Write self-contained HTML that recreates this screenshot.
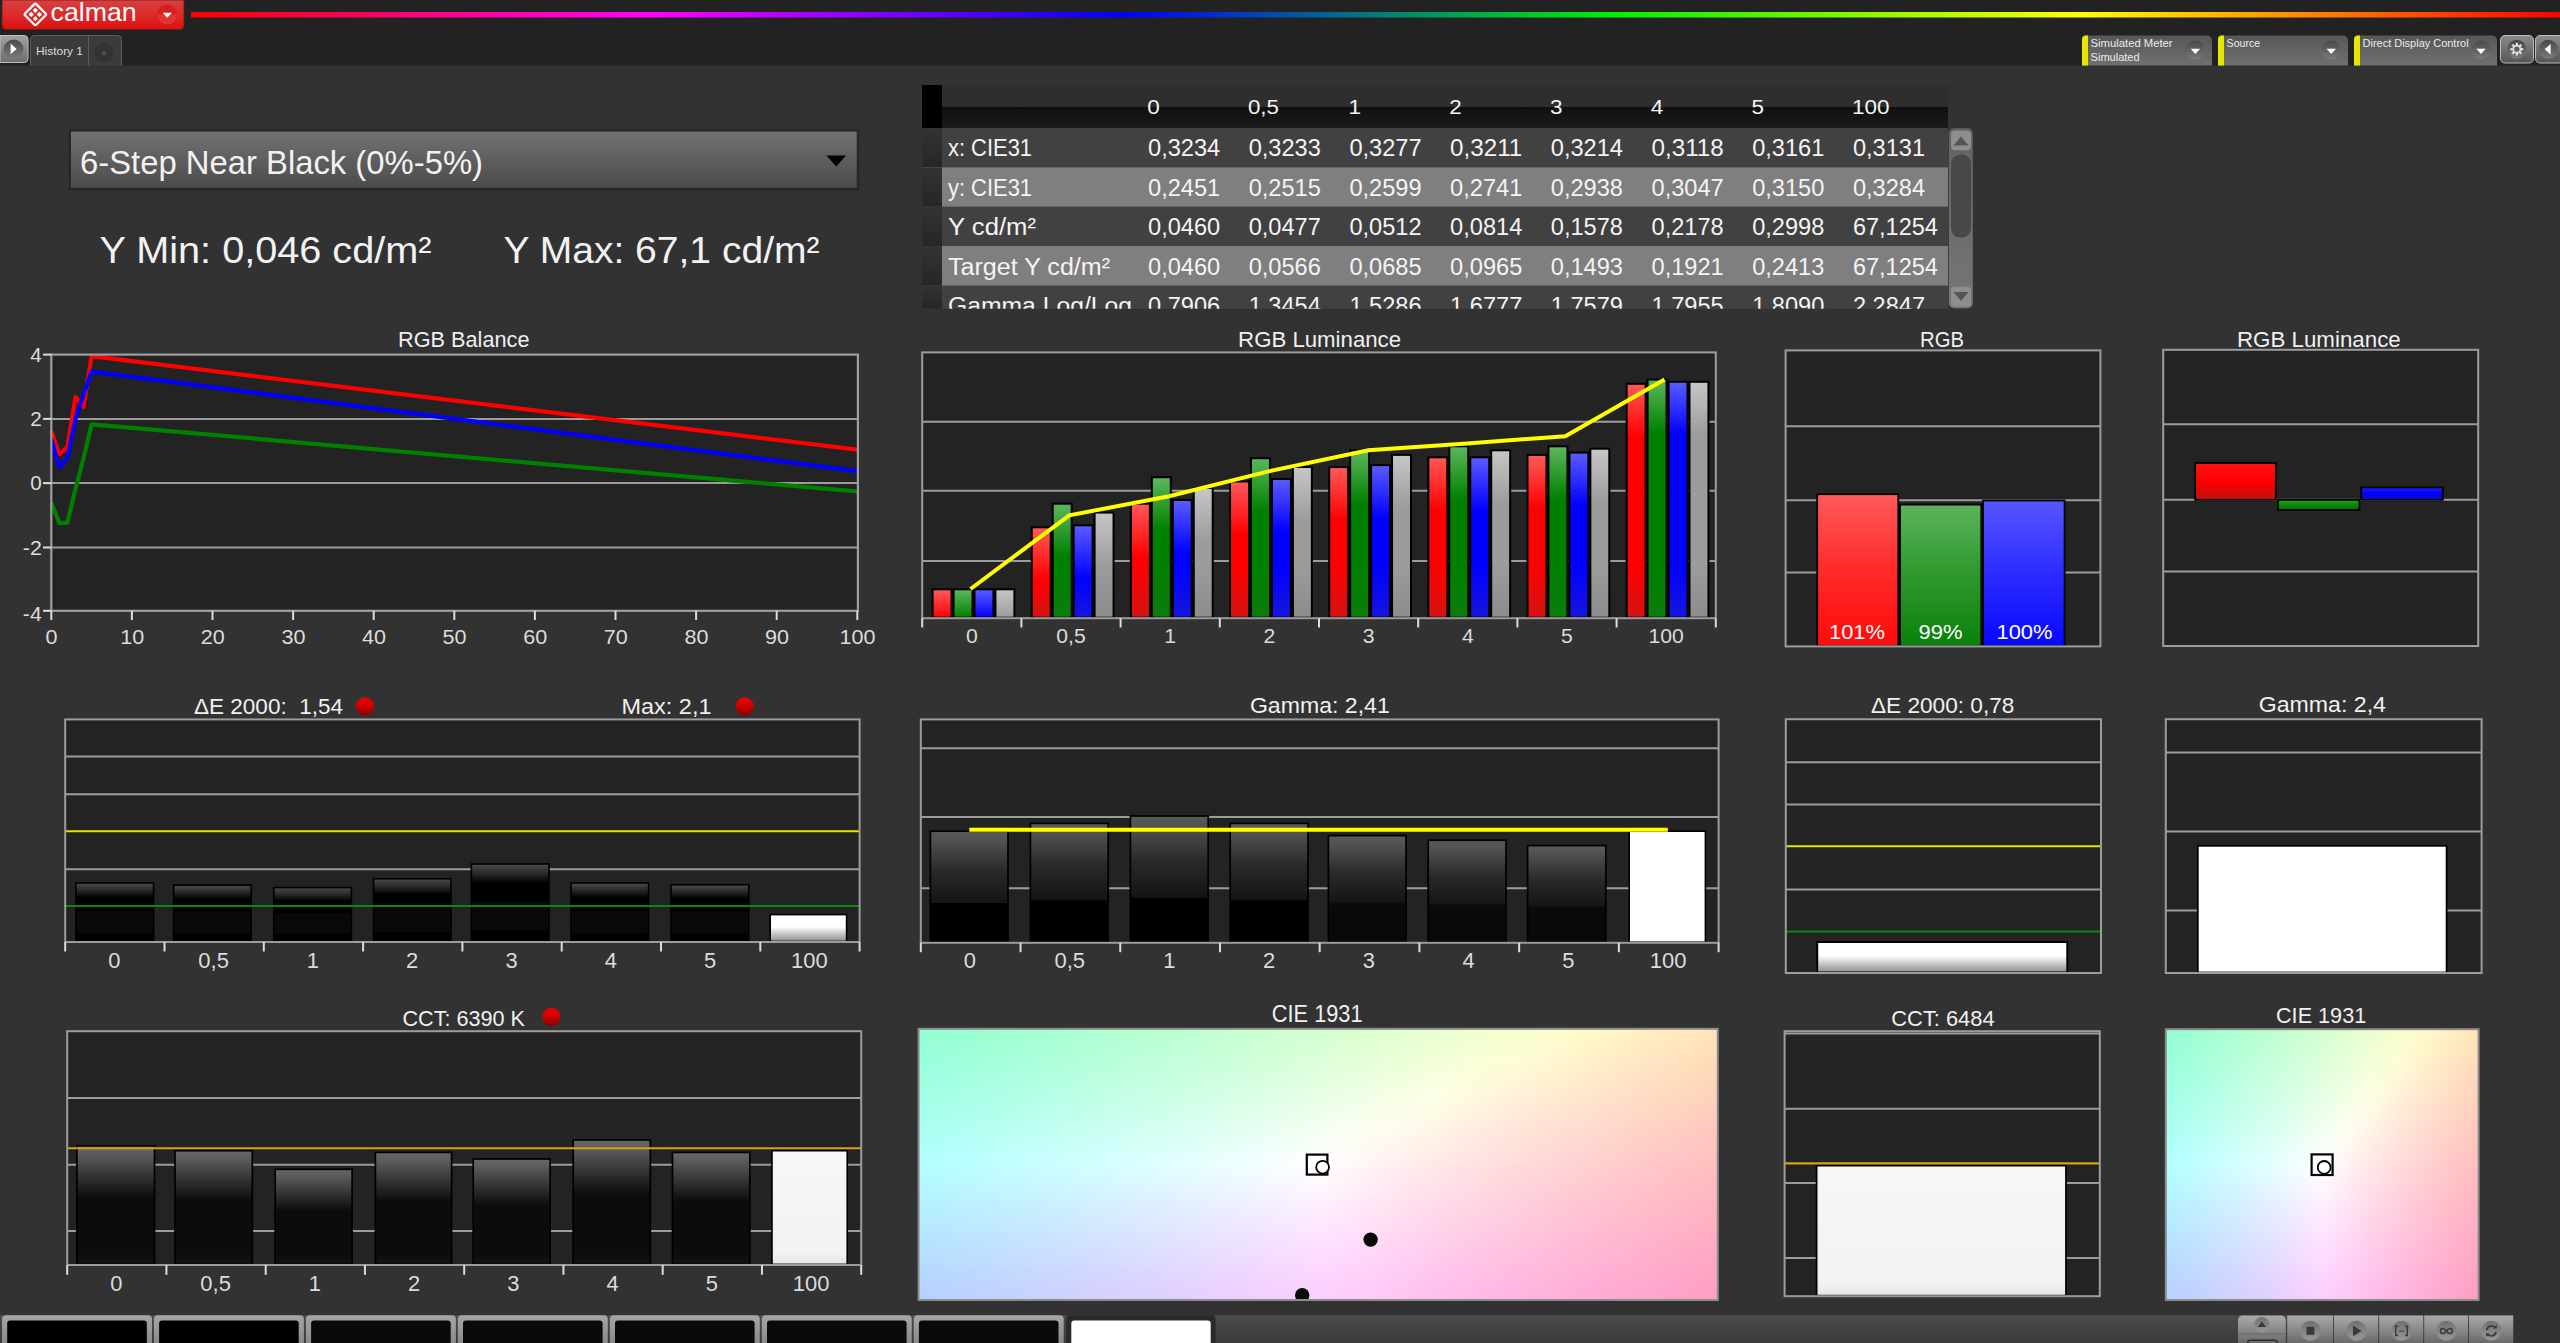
<!DOCTYPE html>
<html lang="en">
<head>
<meta charset="utf-8">
<title>Calman - 6-Step Near Black (0%-5%)</title>
<style>
html,body{margin:0;padding:0;background:#323232;overflow:hidden}
body{width:2560px;height:1343px;font-family:'Liberation Sans', sans-serif}
#app{position:relative;width:2560px;height:1343px;overflow:hidden;background:#323232}
svg{position:absolute;left:0;top:0;display:block}
svg text{font-family:'Liberation Sans', sans-serif;white-space:pre}
</style>
</head>
<body>
<div id="app">
<svg width="2560" height="1343" viewBox="0 0 2560 1343" xml:space="preserve">
<defs>
<linearGradient id="gRed" x1="0" y1="0" x2="0" y2="1"><stop offset="0" stop-color="#ff5a5a"/><stop offset="0.12" stop-color="#ff4a4a"/><stop offset="0.55" stop-color="#ff0000"/><stop offset="1" stop-color="#e01212"/></linearGradient>
<linearGradient id="gGreen" x1="0" y1="0" x2="0" y2="1"><stop offset="0" stop-color="#5cb65c"/><stop offset="0.12" stop-color="#4cae4c"/><stop offset="0.55" stop-color="#008000"/><stop offset="1" stop-color="#0a7a0a"/></linearGradient>
<linearGradient id="gBlue" x1="0" y1="0" x2="0" y2="1"><stop offset="0" stop-color="#5c5cff"/><stop offset="0.12" stop-color="#4c4cff"/><stop offset="0.55" stop-color="#0000ff"/><stop offset="1" stop-color="#1010e0"/></linearGradient>
<linearGradient id="gGray" x1="0" y1="0" x2="0" y2="1"><stop offset="0" stop-color="#c8c8c8"/><stop offset="0.12" stop-color="#c0c0c0"/><stop offset="0.55" stop-color="#989898"/><stop offset="1" stop-color="#8a8a8a"/></linearGradient>
<linearGradient id="gBlk" x1="0" y1="0" x2="0" y2="1"><stop offset="0" stop-color="#5a5a5a"/><stop offset="0.08" stop-color="#525252"/><stop offset="0.35" stop-color="#2a2a2a"/><stop offset="0.645" stop-color="#141414"/><stop offset="0.65" stop-color="#000000"/><stop offset="1" stop-color="#000000"/></linearGradient>
<linearGradient id="gBlk2" x1="0" y1="0" x2="0" y2="1"><stop offset="0" stop-color="#5a5a5a"/><stop offset="0.08" stop-color="#525252"/><stop offset="0.35" stop-color="#2a2a2a"/><stop offset="0.62" stop-color="#151515"/><stop offset="0.64" stop-color="#0a0a0a"/><stop offset="1" stop-color="#080808"/></linearGradient>
<linearGradient id="gBlkC" x1="0" y1="0" x2="0" y2="1"><stop offset="0" stop-color="#686868"/><stop offset="0.08" stop-color="#5a5a5a"/><stop offset="0.25" stop-color="#343434"/><stop offset="0.44" stop-color="#0c0c0c"/><stop offset="0.9" stop-color="#0c0c0c"/><stop offset="1" stop-color="#141414"/></linearGradient>
<linearGradient id="gBlkDE" x1="0" y1="0" x2="0" y2="1"><stop offset="0" stop-color="#4c4c4c"/><stop offset="0.12" stop-color="#2a2a2a"/><stop offset="0.25" stop-color="#000000"/><stop offset="0.46" stop-color="#000000"/><stop offset="0.5" stop-color="#090909"/><stop offset="0.84" stop-color="#090909"/><stop offset="0.87" stop-color="#000000"/><stop offset="1" stop-color="#000000"/></linearGradient>
<linearGradient id="gWhtDE" x1="0" y1="0" x2="0" y2="1"><stop offset="0" stop-color="#ffffff"/><stop offset="0.45" stop-color="#ffffff"/><stop offset="1" stop-color="#8c8c8c"/></linearGradient>
<linearGradient id="gWht" x1="0" y1="0" x2="0" y2="1"><stop offset="0" stop-color="#ffffff"/><stop offset="1" stop-color="#ffffff"/></linearGradient>
<linearGradient id="gWhtC" x1="0" y1="0" x2="0" y2="1"><stop offset="0" stop-color="#f7f7f7"/><stop offset="0.9" stop-color="#f2f2f2"/><stop offset="1" stop-color="#e6e6e6"/></linearGradient>
<linearGradient id="rainbow" gradientUnits="userSpaceOnUse" x1="191" x2="2560" y1="0" y2="0"><stop offset="0" stop-color="#ff0000"/><stop offset="0.195" stop-color="#ff00ff"/><stop offset="0.392" stop-color="#0000ff"/><stop offset="0.60" stop-color="#00f000"/><stop offset="0.797" stop-color="#ffff00"/><stop offset="1" stop-color="#ff0000"/></linearGradient>
<linearGradient id="gLogo" x1="0" y1="0" x2="0" y2="1"><stop offset="0" stop-color="#d84040"/><stop offset="0.5" stop-color="#dc2a2a"/><stop offset="1" stop-color="#dc1010"/></linearGradient>
<linearGradient id="gBtn" x1="0" y1="0" x2="0" y2="1"><stop offset="0" stop-color="#a2a2a2"/><stop offset="1" stop-color="#6c6c6c"/></linearGradient>
<linearGradient id="gCirc" x1="0" y1="0" x2="0" y2="1"><stop offset="0" stop-color="#4c4c4c"/><stop offset="1" stop-color="#7c7c7c"/></linearGradient>
<linearGradient id="gTool" x1="0" y1="0" x2="0" y2="1"><stop offset="0" stop-color="#575757"/><stop offset="1" stop-color="#707070"/></linearGradient>
<linearGradient id="gTCirc" x1="0" y1="0" x2="0" y2="1"><stop offset="0" stop-color="#484848"/><stop offset="1" stop-color="#7a7a7a"/></linearGradient>
<linearGradient id="gBtn2" x1="0" y1="0" x2="0" y2="1"><stop offset="0" stop-color="#8c8c8c"/><stop offset="1" stop-color="#555555"/></linearGradient>
<linearGradient id="gDrop" x1="0" y1="0" x2="0" y2="1"><stop offset="0" stop-color="#727272"/><stop offset="0.5" stop-color="#5e5e5e"/><stop offset="1" stop-color="#4c4c4c"/></linearGradient>
<linearGradient id="gHdr" x1="0" y1="0" x2="0" y2="1"><stop offset="0" stop-color="#101010"/><stop offset="1" stop-color="#1b1b1b"/></linearGradient>
<linearGradient id="gRowL" x1="0" y1="0" x2="0" y2="1"><stop offset="0" stop-color="#333333"/><stop offset="1" stop-color="#262626"/></linearGradient>
<linearGradient id="gSB" x1="0" y1="0" x2="0" y2="1"><stop offset="0" stop-color="#626262"/><stop offset="1" stop-color="#767676"/></linearGradient>
<linearGradient id="gb0_0" gradientUnits="userSpaceOnUse" x1="0" x2="0" y1="590.3" y2="617.7"><stop offset="0" stop-color="#ff5858"/><stop offset="1.000" stop-color="#ff0000"/></linearGradient>
<linearGradient id="gb0_1" gradientUnits="userSpaceOnUse" x1="0" x2="0" y1="590.3" y2="617.7"><stop offset="0" stop-color="#5cb65c"/><stop offset="1.000" stop-color="#008000"/></linearGradient>
<linearGradient id="gb0_2" gradientUnits="userSpaceOnUse" x1="0" x2="0" y1="590.3" y2="617.7"><stop offset="0" stop-color="#5a5aff"/><stop offset="1.000" stop-color="#0000ff"/></linearGradient>
<linearGradient id="gb0_3" gradientUnits="userSpaceOnUse" x1="0" x2="0" y1="590.3" y2="617.7"><stop offset="0" stop-color="#c6c6c6"/><stop offset="1.000" stop-color="#9c9c9c"/></linearGradient>
<linearGradient id="gb1_0" gradientUnits="userSpaceOnUse" x1="0" x2="0" y1="528.3" y2="617.7"><stop offset="0" stop-color="#ff5858"/><stop offset="0.582" stop-color="#ff0000"/><stop offset="0.582" stop-color="#ff0000"/><stop offset="1" stop-color="#d41414"/></linearGradient>
<linearGradient id="gb1_1" gradientUnits="userSpaceOnUse" x1="0" x2="0" y1="504.7" y2="617.7"><stop offset="0" stop-color="#5cb65c"/><stop offset="0.460" stop-color="#008000"/><stop offset="0.540" stop-color="#008000"/><stop offset="1" stop-color="#0c7c0c"/></linearGradient>
<linearGradient id="gb1_2" gradientUnits="userSpaceOnUse" x1="0" x2="0" y1="526.3" y2="617.7"><stop offset="0" stop-color="#5a5aff"/><stop offset="0.569" stop-color="#0000ff"/><stop offset="0.569" stop-color="#0000ff"/><stop offset="1" stop-color="#1616de"/></linearGradient>
<linearGradient id="gb1_3" gradientUnits="userSpaceOnUse" x1="0" x2="0" y1="513.6" y2="617.7"><stop offset="0" stop-color="#c6c6c6"/><stop offset="0.500" stop-color="#9c9c9c"/><stop offset="0.500" stop-color="#9c9c9c"/><stop offset="1" stop-color="#8c8c8c"/></linearGradient>
<linearGradient id="gb2_0" gradientUnits="userSpaceOnUse" x1="0" x2="0" y1="504.7" y2="617.7"><stop offset="0" stop-color="#ff5858"/><stop offset="0.460" stop-color="#ff0000"/><stop offset="0.540" stop-color="#ff0000"/><stop offset="1" stop-color="#d41414"/></linearGradient>
<linearGradient id="gb2_1" gradientUnits="userSpaceOnUse" x1="0" x2="0" y1="478.2" y2="617.7"><stop offset="0" stop-color="#5cb65c"/><stop offset="0.373" stop-color="#008000"/><stop offset="0.627" stop-color="#008000"/><stop offset="1" stop-color="#0c7c0c"/></linearGradient>
<linearGradient id="gb2_2" gradientUnits="userSpaceOnUse" x1="0" x2="0" y1="501.0" y2="617.7"><stop offset="0" stop-color="#5a5aff"/><stop offset="0.446" stop-color="#0000ff"/><stop offset="0.554" stop-color="#0000ff"/><stop offset="1" stop-color="#1616de"/></linearGradient>
<linearGradient id="gb2_3" gradientUnits="userSpaceOnUse" x1="0" x2="0" y1="489.0" y2="617.7"><stop offset="0" stop-color="#c6c6c6"/><stop offset="0.404" stop-color="#9c9c9c"/><stop offset="0.596" stop-color="#9c9c9c"/><stop offset="1" stop-color="#8c8c8c"/></linearGradient>
<linearGradient id="gb3_0" gradientUnits="userSpaceOnUse" x1="0" x2="0" y1="482.5" y2="617.7"><stop offset="0" stop-color="#ff5858"/><stop offset="0.385" stop-color="#ff0000"/><stop offset="0.615" stop-color="#ff0000"/><stop offset="1" stop-color="#d41414"/></linearGradient>
<linearGradient id="gb3_1" gradientUnits="userSpaceOnUse" x1="0" x2="0" y1="459.2" y2="617.7"><stop offset="0" stop-color="#5cb65c"/><stop offset="0.328" stop-color="#008000"/><stop offset="0.672" stop-color="#008000"/><stop offset="1" stop-color="#0c7c0c"/></linearGradient>
<linearGradient id="gb3_2" gradientUnits="userSpaceOnUse" x1="0" x2="0" y1="480.0" y2="617.7"><stop offset="0" stop-color="#5a5aff"/><stop offset="0.378" stop-color="#0000ff"/><stop offset="0.622" stop-color="#0000ff"/><stop offset="1" stop-color="#1616de"/></linearGradient>
<linearGradient id="gb3_3" gradientUnits="userSpaceOnUse" x1="0" x2="0" y1="468.0" y2="617.7"><stop offset="0" stop-color="#c6c6c6"/><stop offset="0.347" stop-color="#9c9c9c"/><stop offset="0.653" stop-color="#9c9c9c"/><stop offset="1" stop-color="#8c8c8c"/></linearGradient>
<linearGradient id="gb4_0" gradientUnits="userSpaceOnUse" x1="0" x2="0" y1="468.1" y2="617.7"><stop offset="0" stop-color="#ff5858"/><stop offset="0.348" stop-color="#ff0000"/><stop offset="0.652" stop-color="#ff0000"/><stop offset="1" stop-color="#d41414"/></linearGradient>
<linearGradient id="gb4_1" gradientUnits="userSpaceOnUse" x1="0" x2="0" y1="451.5" y2="617.7"><stop offset="0" stop-color="#5cb65c"/><stop offset="0.313" stop-color="#008000"/><stop offset="0.687" stop-color="#008000"/><stop offset="1" stop-color="#0c7c0c"/></linearGradient>
<linearGradient id="gb4_2" gradientUnits="userSpaceOnUse" x1="0" x2="0" y1="466.1" y2="617.7"><stop offset="0" stop-color="#5a5aff"/><stop offset="0.343" stop-color="#0000ff"/><stop offset="0.657" stop-color="#0000ff"/><stop offset="1" stop-color="#1616de"/></linearGradient>
<linearGradient id="gb4_3" gradientUnits="userSpaceOnUse" x1="0" x2="0" y1="455.9" y2="617.7"><stop offset="0" stop-color="#c6c6c6"/><stop offset="0.321" stop-color="#9c9c9c"/><stop offset="0.679" stop-color="#9c9c9c"/><stop offset="1" stop-color="#8c8c8c"/></linearGradient>
<linearGradient id="gb5_0" gradientUnits="userSpaceOnUse" x1="0" x2="0" y1="458.3" y2="617.7"><stop offset="0" stop-color="#ff5858"/><stop offset="0.326" stop-color="#ff0000"/><stop offset="0.674" stop-color="#ff0000"/><stop offset="1" stop-color="#d41414"/></linearGradient>
<linearGradient id="gb5_1" gradientUnits="userSpaceOnUse" x1="0" x2="0" y1="447.3" y2="617.7"><stop offset="0" stop-color="#5cb65c"/><stop offset="0.305" stop-color="#008000"/><stop offset="0.695" stop-color="#008000"/><stop offset="1" stop-color="#0c7c0c"/></linearGradient>
<linearGradient id="gb5_2" gradientUnits="userSpaceOnUse" x1="0" x2="0" y1="458.3" y2="617.7"><stop offset="0" stop-color="#5a5aff"/><stop offset="0.326" stop-color="#0000ff"/><stop offset="0.674" stop-color="#0000ff"/><stop offset="1" stop-color="#1616de"/></linearGradient>
<linearGradient id="gb5_3" gradientUnits="userSpaceOnUse" x1="0" x2="0" y1="451.3" y2="617.7"><stop offset="0" stop-color="#c6c6c6"/><stop offset="0.312" stop-color="#9c9c9c"/><stop offset="0.688" stop-color="#9c9c9c"/><stop offset="1" stop-color="#8c8c8c"/></linearGradient>
<linearGradient id="gb6_0" gradientUnits="userSpaceOnUse" x1="0" x2="0" y1="455.9" y2="617.7"><stop offset="0" stop-color="#ff5858"/><stop offset="0.321" stop-color="#ff0000"/><stop offset="0.679" stop-color="#ff0000"/><stop offset="1" stop-color="#d41414"/></linearGradient>
<linearGradient id="gb6_1" gradientUnits="userSpaceOnUse" x1="0" x2="0" y1="447.3" y2="617.7"><stop offset="0" stop-color="#5cb65c"/><stop offset="0.305" stop-color="#008000"/><stop offset="0.695" stop-color="#008000"/><stop offset="1" stop-color="#0c7c0c"/></linearGradient>
<linearGradient id="gb6_2" gradientUnits="userSpaceOnUse" x1="0" x2="0" y1="453.6" y2="617.7"><stop offset="0" stop-color="#5a5aff"/><stop offset="0.317" stop-color="#0000ff"/><stop offset="0.683" stop-color="#0000ff"/><stop offset="1" stop-color="#1616de"/></linearGradient>
<linearGradient id="gb6_3" gradientUnits="userSpaceOnUse" x1="0" x2="0" y1="449.7" y2="617.7"><stop offset="0" stop-color="#c6c6c6"/><stop offset="0.310" stop-color="#9c9c9c"/><stop offset="0.690" stop-color="#9c9c9c"/><stop offset="1" stop-color="#8c8c8c"/></linearGradient>
<linearGradient id="gb7_0" gradientUnits="userSpaceOnUse" x1="0" x2="0" y1="384.8" y2="617.7"><stop offset="0" stop-color="#ff5858"/><stop offset="0.223" stop-color="#ff0000"/><stop offset="0.777" stop-color="#ff0000"/><stop offset="1" stop-color="#d41414"/></linearGradient>
<linearGradient id="gb7_1" gradientUnits="userSpaceOnUse" x1="0" x2="0" y1="380.6" y2="617.7"><stop offset="0" stop-color="#5cb65c"/><stop offset="0.219" stop-color="#008000"/><stop offset="0.781" stop-color="#008000"/><stop offset="1" stop-color="#0c7c0c"/></linearGradient>
<linearGradient id="gb7_2" gradientUnits="userSpaceOnUse" x1="0" x2="0" y1="382.8" y2="617.7"><stop offset="0" stop-color="#5a5aff"/><stop offset="0.221" stop-color="#0000ff"/><stop offset="0.779" stop-color="#0000ff"/><stop offset="1" stop-color="#1616de"/></linearGradient>
<linearGradient id="gb7_3" gradientUnits="userSpaceOnUse" x1="0" x2="0" y1="382.8" y2="617.7"><stop offset="0" stop-color="#c6c6c6"/><stop offset="0.221" stop-color="#9c9c9c"/><stop offset="0.779" stop-color="#9c9c9c"/><stop offset="1" stop-color="#8c8c8c"/></linearGradient>
<linearGradient id="gRedS" x1="0" y1="0" x2="0" y2="1"><stop offset="0" stop-color="#ff5a5a"/><stop offset="0.5" stop-color="#ff2a2a"/><stop offset="1" stop-color="#ff0a0a"/></linearGradient>
<linearGradient id="gGreenS" x1="0" y1="0" x2="0" y2="1"><stop offset="0" stop-color="#5cb45c"/><stop offset="0.5" stop-color="#2e982e"/><stop offset="1" stop-color="#0a800a"/></linearGradient>
<linearGradient id="gBlueS" x1="0" y1="0" x2="0" y2="1"><stop offset="0" stop-color="#5656ff"/><stop offset="0.5" stop-color="#2c2cff"/><stop offset="1" stop-color="#0808ff"/></linearGradient>
<linearGradient id="gRedQ" x1="0" y1="0" x2="0" y2="1"><stop offset="0" stop-color="#ff1414"/><stop offset="0.5" stop-color="#ff0000"/><stop offset="1" stop-color="#c01010"/></linearGradient>
<linearGradient id="gGreenQ" x1="0" y1="0" x2="0" y2="1"><stop offset="0" stop-color="#20a020"/><stop offset="0.5" stop-color="#0a8a0a"/><stop offset="1" stop-color="#067006"/></linearGradient>
<linearGradient id="gBlueQ" x1="0" y1="0" x2="0" y2="1"><stop offset="0" stop-color="#2020ff"/><stop offset="0.5" stop-color="#0000ff"/><stop offset="1" stop-color="#1010c0"/></linearGradient>
<linearGradient id="gDot" x1="0" y1="0" x2="0" y2="1"><stop offset="0" stop-color="#f00000"/><stop offset="0.45" stop-color="#d40000"/><stop offset="1" stop-color="#840000"/></linearGradient>
<linearGradient id="car0" x1="0" y1="0" x2="1" y2="0"><stop offset="0.0" stop-color="#91ffd2"/><stop offset="0.05" stop-color="#97ffd2"/><stop offset="0.1" stop-color="#9effd1"/><stop offset="0.15" stop-color="#a4ffd1"/><stop offset="0.2" stop-color="#aaffd1"/><stop offset="0.25" stop-color="#b1ffd1"/><stop offset="0.3" stop-color="#b7ffd0"/><stop offset="0.35" stop-color="#beffd0"/><stop offset="0.4" stop-color="#c5ffd0"/><stop offset="0.45" stop-color="#ccffcf"/><stop offset="0.5" stop-color="#d3ffcf"/><stop offset="0.55" stop-color="#daffcf"/><stop offset="0.6" stop-color="#e1ffcf"/><stop offset="0.65" stop-color="#e8ffce"/><stop offset="0.7" stop-color="#efffce"/><stop offset="0.75" stop-color="#f7ffce"/><stop offset="0.8" stop-color="#feffcd"/><stop offset="0.85" stop-color="#fff9c8"/><stop offset="0.9" stop-color="#fff1c2"/><stop offset="0.95" stop-color="#ffebbc"/><stop offset="1.0" stop-color="#ffe4b7"/></linearGradient>
<linearGradient id="car1" x1="0" y1="0" x2="1" y2="0"><stop offset="0.0" stop-color="#99ffdc"/><stop offset="0.05" stop-color="#9fffdc"/><stop offset="0.1" stop-color="#a6ffdc"/><stop offset="0.15" stop-color="#acffdc"/><stop offset="0.2" stop-color="#b3ffdb"/><stop offset="0.25" stop-color="#baffdb"/><stop offset="0.3" stop-color="#c0ffdb"/><stop offset="0.35" stop-color="#c7ffdb"/><stop offset="0.4" stop-color="#ceffda"/><stop offset="0.45" stop-color="#d5ffda"/><stop offset="0.5" stop-color="#ddffda"/><stop offset="0.55" stop-color="#e4ffda"/><stop offset="0.6" stop-color="#ebffd9"/><stop offset="0.65" stop-color="#f3ffd9"/><stop offset="0.7" stop-color="#faffd9"/><stop offset="0.75" stop-color="#fffcd6"/><stop offset="0.8" stop-color="#fff5d0"/><stop offset="0.85" stop-color="#ffeeca"/><stop offset="0.9" stop-color="#ffe7c4"/><stop offset="0.95" stop-color="#ffe1be"/><stop offset="1.0" stop-color="#ffdab9"/></linearGradient>
<linearGradient id="car2" x1="0" y1="0" x2="1" y2="0"><stop offset="0.0" stop-color="#a1ffe7"/><stop offset="0.05" stop-color="#a7ffe7"/><stop offset="0.1" stop-color="#aeffe7"/><stop offset="0.15" stop-color="#b5ffe7"/><stop offset="0.2" stop-color="#bcffe6"/><stop offset="0.25" stop-color="#c3ffe6"/><stop offset="0.3" stop-color="#caffe6"/><stop offset="0.35" stop-color="#d1ffe6"/><stop offset="0.4" stop-color="#d8ffe6"/><stop offset="0.45" stop-color="#e0ffe6"/><stop offset="0.5" stop-color="#e7ffe5"/><stop offset="0.55" stop-color="#efffe5"/><stop offset="0.6" stop-color="#f7ffe5"/><stop offset="0.65" stop-color="#feffe5"/><stop offset="0.7" stop-color="#fff8de"/><stop offset="0.75" stop-color="#fff0d8"/><stop offset="0.8" stop-color="#ffead1"/><stop offset="0.85" stop-color="#ffe3cb"/><stop offset="0.9" stop-color="#ffddc6"/><stop offset="0.95" stop-color="#ffd7c0"/><stop offset="1.0" stop-color="#ffd1bb"/></linearGradient>
<linearGradient id="car3" x1="0" y1="0" x2="1" y2="0"><stop offset="0.0" stop-color="#a9fff3"/><stop offset="0.05" stop-color="#b0fff3"/><stop offset="0.1" stop-color="#b7fff2"/><stop offset="0.15" stop-color="#befff2"/><stop offset="0.2" stop-color="#c5fff2"/><stop offset="0.25" stop-color="#cdfff2"/><stop offset="0.3" stop-color="#d4fff2"/><stop offset="0.35" stop-color="#dbfff2"/><stop offset="0.4" stop-color="#e3fff2"/><stop offset="0.45" stop-color="#ebfff2"/><stop offset="0.5" stop-color="#f3fff2"/><stop offset="0.55" stop-color="#fbfff2"/><stop offset="0.6" stop-color="#fffbee"/><stop offset="0.65" stop-color="#fff4e7"/><stop offset="0.7" stop-color="#ffece0"/><stop offset="0.75" stop-color="#ffe5d9"/><stop offset="0.8" stop-color="#ffdfd3"/><stop offset="0.85" stop-color="#ffd9cd"/><stop offset="0.9" stop-color="#ffd3c7"/><stop offset="0.95" stop-color="#ffcdc2"/><stop offset="1.0" stop-color="#ffc8bd"/></linearGradient>
<linearGradient id="car4" x1="0" y1="0" x2="1" y2="0"><stop offset="0.0" stop-color="#b2ffff"/><stop offset="0.05" stop-color="#b9ffff"/><stop offset="0.1" stop-color="#c1ffff"/><stop offset="0.15" stop-color="#c8ffff"/><stop offset="0.2" stop-color="#cfffff"/><stop offset="0.25" stop-color="#d7ffff"/><stop offset="0.3" stop-color="#dfffff"/><stop offset="0.35" stop-color="#e7ffff"/><stop offset="0.4" stop-color="#efffff"/><stop offset="0.45" stop-color="#f7ffff"/><stop offset="0.5" stop-color="#ffffff"/><stop offset="0.55" stop-color="#fff7f7"/><stop offset="0.6" stop-color="#ffefef"/><stop offset="0.65" stop-color="#ffe8e8"/><stop offset="0.7" stop-color="#ffe1e1"/><stop offset="0.75" stop-color="#ffdbdb"/><stop offset="0.8" stop-color="#ffd5d5"/><stop offset="0.85" stop-color="#ffcfcf"/><stop offset="0.9" stop-color="#ffc9c9"/><stop offset="0.95" stop-color="#ffc4c4"/><stop offset="1.0" stop-color="#ffbfbf"/></linearGradient>
<linearGradient id="car5" x1="0" y1="0" x2="1" y2="0"><stop offset="0.0" stop-color="#b3f3ff"/><stop offset="0.05" stop-color="#baf3ff"/><stop offset="0.1" stop-color="#c1f3ff"/><stop offset="0.15" stop-color="#c8f2ff"/><stop offset="0.2" stop-color="#d0f2ff"/><stop offset="0.25" stop-color="#d7f2ff"/><stop offset="0.3" stop-color="#dff2ff"/><stop offset="0.35" stop-color="#e6f2ff"/><stop offset="0.4" stop-color="#eef2ff"/><stop offset="0.45" stop-color="#f6f2ff"/><stop offset="0.5" stop-color="#fef2ff"/><stop offset="0.55" stop-color="#ffebf8"/><stop offset="0.6" stop-color="#ffe4f1"/><stop offset="0.65" stop-color="#ffdde9"/><stop offset="0.7" stop-color="#ffd7e3"/><stop offset="0.75" stop-color="#ffd0dc"/><stop offset="0.8" stop-color="#ffcbd6"/><stop offset="0.85" stop-color="#ffc5d0"/><stop offset="0.9" stop-color="#ffc0cb"/><stop offset="0.95" stop-color="#ffbbc5"/><stop offset="1.0" stop-color="#ffb6c0"/></linearGradient>
<linearGradient id="car6" x1="0" y1="0" x2="1" y2="0"><stop offset="0.0" stop-color="#b4e7ff"/><stop offset="0.05" stop-color="#bbe7ff"/><stop offset="0.1" stop-color="#c2e6ff"/><stop offset="0.15" stop-color="#c9e6ff"/><stop offset="0.2" stop-color="#d0e6ff"/><stop offset="0.25" stop-color="#d7e6ff"/><stop offset="0.3" stop-color="#dee6ff"/><stop offset="0.35" stop-color="#e6e6ff"/><stop offset="0.4" stop-color="#eee5ff"/><stop offset="0.45" stop-color="#f5e5ff"/><stop offset="0.5" stop-color="#fde5ff"/><stop offset="0.55" stop-color="#ffe0f9"/><stop offset="0.6" stop-color="#ffd9f2"/><stop offset="0.65" stop-color="#ffd2eb"/><stop offset="0.7" stop-color="#ffcce4"/><stop offset="0.75" stop-color="#ffc7de"/><stop offset="0.8" stop-color="#ffc1d8"/><stop offset="0.85" stop-color="#ffbcd2"/><stop offset="0.9" stop-color="#ffb7cc"/><stop offset="0.95" stop-color="#ffb2c7"/><stop offset="1.0" stop-color="#ffadc2"/></linearGradient>
<linearGradient id="car7" x1="0" y1="0" x2="1" y2="0"><stop offset="0.0" stop-color="#b4dbff"/><stop offset="0.05" stop-color="#bbdbff"/><stop offset="0.1" stop-color="#c2dbff"/><stop offset="0.15" stop-color="#c9dbff"/><stop offset="0.2" stop-color="#d0daff"/><stop offset="0.25" stop-color="#d7daff"/><stop offset="0.3" stop-color="#dedaff"/><stop offset="0.35" stop-color="#e6daff"/><stop offset="0.4" stop-color="#edd9ff"/><stop offset="0.45" stop-color="#f5d9ff"/><stop offset="0.5" stop-color="#fcd9ff"/><stop offset="0.55" stop-color="#ffd4fa"/><stop offset="0.6" stop-color="#ffcef3"/><stop offset="0.65" stop-color="#ffc8ec"/><stop offset="0.7" stop-color="#ffc2e5"/><stop offset="0.75" stop-color="#ffbddf"/><stop offset="0.8" stop-color="#ffb8d9"/><stop offset="0.85" stop-color="#ffb3d3"/><stop offset="0.9" stop-color="#ffaece"/><stop offset="0.95" stop-color="#ffa9c9"/><stop offset="1.0" stop-color="#ffa5c4"/></linearGradient>
<linearGradient id="car8" x1="0" y1="0" x2="1" y2="0"><stop offset="0.0" stop-color="#b5d1ff"/><stop offset="0.05" stop-color="#bcd0ff"/><stop offset="0.1" stop-color="#c2d0ff"/><stop offset="0.15" stop-color="#c9d0ff"/><stop offset="0.2" stop-color="#d0cfff"/><stop offset="0.25" stop-color="#d7cfff"/><stop offset="0.3" stop-color="#decfff"/><stop offset="0.35" stop-color="#e5ceff"/><stop offset="0.4" stop-color="#edceff"/><stop offset="0.45" stop-color="#f4ceff"/><stop offset="0.5" stop-color="#fbcdff"/><stop offset="0.55" stop-color="#ffcafb"/><stop offset="0.6" stop-color="#ffc4f4"/><stop offset="0.65" stop-color="#ffbeed"/><stop offset="0.7" stop-color="#ffb9e7"/><stop offset="0.75" stop-color="#ffb4e0"/><stop offset="0.8" stop-color="#ffafdb"/><stop offset="0.85" stop-color="#ffaad5"/><stop offset="0.9" stop-color="#ffa6cf"/><stop offset="0.95" stop-color="#ffa1ca"/><stop offset="1.0" stop-color="#ff9dc5"/></linearGradient>
<linearGradient id="cam" x1="0" y1="0" x2="0" y2="1"><stop offset="0" stop-color="#000"/><stop offset="1" stop-color="#fff"/></linearGradient>
<mask id="cak0" maskUnits="userSpaceOnUse" x="918" y="1029.00" width="800" height="34.00"><rect x="918" y="1029.00" width="800" height="34.00" fill="url(#cam)"/></mask>
<mask id="cak1" maskUnits="userSpaceOnUse" x="918" y="1063.00" width="800" height="34.00"><rect x="918" y="1063.00" width="800" height="34.00" fill="url(#cam)"/></mask>
<mask id="cak2" maskUnits="userSpaceOnUse" x="918" y="1097.00" width="800" height="33.00"><rect x="918" y="1097.00" width="800" height="33.00" fill="url(#cam)"/></mask>
<mask id="cak3" maskUnits="userSpaceOnUse" x="918" y="1130.00" width="800" height="34.00"><rect x="918" y="1130.00" width="800" height="34.00" fill="url(#cam)"/></mask>
<mask id="cak4" maskUnits="userSpaceOnUse" x="918" y="1164.00" width="800" height="34.00"><rect x="918" y="1164.00" width="800" height="34.00" fill="url(#cam)"/></mask>
<mask id="cak5" maskUnits="userSpaceOnUse" x="918" y="1198.00" width="800" height="34.00"><rect x="918" y="1198.00" width="800" height="34.00" fill="url(#cam)"/></mask>
<mask id="cak6" maskUnits="userSpaceOnUse" x="918" y="1232.00" width="800" height="34.00"><rect x="918" y="1232.00" width="800" height="34.00" fill="url(#cam)"/></mask>
<mask id="cak7" maskUnits="userSpaceOnUse" x="918" y="1266.00" width="800" height="34.00"><rect x="918" y="1266.00" width="800" height="34.00" fill="url(#cam)"/></mask>
<linearGradient id="cbr0" x1="0" y1="0" x2="1" y2="0"><stop offset="0.0" stop-color="#91ffd2"/><stop offset="0.0833" stop-color="#9cffd2"/><stop offset="0.1667" stop-color="#a6ffd1"/><stop offset="0.25" stop-color="#b1ffd1"/><stop offset="0.3333" stop-color="#bcffd0"/><stop offset="0.4167" stop-color="#c7ffd0"/><stop offset="0.5" stop-color="#d3ffcf"/><stop offset="0.5833" stop-color="#deffcf"/><stop offset="0.6667" stop-color="#eaffce"/><stop offset="0.75" stop-color="#f7ffce"/><stop offset="0.8333" stop-color="#fffbca"/><stop offset="0.9167" stop-color="#ffefc0"/><stop offset="1.0" stop-color="#ffe4b7"/></linearGradient>
<linearGradient id="cbr1" x1="0" y1="0" x2="1" y2="0"><stop offset="0.0" stop-color="#99ffdc"/><stop offset="0.0833" stop-color="#a3ffdc"/><stop offset="0.1667" stop-color="#aeffdb"/><stop offset="0.25" stop-color="#baffdb"/><stop offset="0.3333" stop-color="#c5ffdb"/><stop offset="0.4167" stop-color="#d1ffda"/><stop offset="0.5" stop-color="#ddffda"/><stop offset="0.5833" stop-color="#e9ffda"/><stop offset="0.6667" stop-color="#f5ffd9"/><stop offset="0.75" stop-color="#fffcd6"/><stop offset="0.8333" stop-color="#fff0cc"/><stop offset="0.9167" stop-color="#ffe5c2"/><stop offset="1.0" stop-color="#ffdab9"/></linearGradient>
<linearGradient id="cbr2" x1="0" y1="0" x2="1" y2="0"><stop offset="0.0" stop-color="#a1ffe7"/><stop offset="0.0833" stop-color="#acffe7"/><stop offset="0.1667" stop-color="#b7ffe7"/><stop offset="0.25" stop-color="#c3ffe6"/><stop offset="0.3333" stop-color="#cfffe6"/><stop offset="0.4167" stop-color="#dbffe6"/><stop offset="0.5" stop-color="#e7ffe5"/><stop offset="0.5833" stop-color="#f4ffe5"/><stop offset="0.6667" stop-color="#fffde3"/><stop offset="0.75" stop-color="#fff0d8"/><stop offset="0.8333" stop-color="#ffe5cd"/><stop offset="0.9167" stop-color="#ffdbc4"/><stop offset="1.0" stop-color="#ffd1bb"/></linearGradient>
<linearGradient id="cbr3" x1="0" y1="0" x2="1" y2="0"><stop offset="0.0" stop-color="#a9fff3"/><stop offset="0.0833" stop-color="#b5fff2"/><stop offset="0.1667" stop-color="#c0fff2"/><stop offset="0.25" stop-color="#cdfff2"/><stop offset="0.3333" stop-color="#d9fff2"/><stop offset="0.4167" stop-color="#e6fff2"/><stop offset="0.5" stop-color="#f3fff2"/><stop offset="0.5833" stop-color="#fffef1"/><stop offset="0.6667" stop-color="#fff1e4"/><stop offset="0.75" stop-color="#ffe5d9"/><stop offset="0.8333" stop-color="#ffdbcf"/><stop offset="0.9167" stop-color="#ffd1c6"/><stop offset="1.0" stop-color="#ffc8bd"/></linearGradient>
<linearGradient id="cbr4" x1="0" y1="0" x2="1" y2="0"><stop offset="0.0" stop-color="#b2ffff"/><stop offset="0.0833" stop-color="#beffff"/><stop offset="0.1667" stop-color="#caffff"/><stop offset="0.25" stop-color="#d7ffff"/><stop offset="0.3333" stop-color="#e4ffff"/><stop offset="0.4167" stop-color="#f1ffff"/><stop offset="0.5" stop-color="#ffffff"/><stop offset="0.5833" stop-color="#fff2f2"/><stop offset="0.6667" stop-color="#ffe6e6"/><stop offset="0.75" stop-color="#ffdbdb"/><stop offset="0.8333" stop-color="#ffd1d1"/><stop offset="0.9167" stop-color="#ffc7c7"/><stop offset="1.0" stop-color="#ffbfbf"/></linearGradient>
<linearGradient id="cbr5" x1="0" y1="0" x2="1" y2="0"><stop offset="0.0" stop-color="#b3f3ff"/><stop offset="0.0833" stop-color="#bff3ff"/><stop offset="0.1667" stop-color="#cbf2ff"/><stop offset="0.25" stop-color="#d7f2ff"/><stop offset="0.3333" stop-color="#e4f2ff"/><stop offset="0.4167" stop-color="#f1f2ff"/><stop offset="0.5" stop-color="#fef2ff"/><stop offset="0.5833" stop-color="#ffe6f3"/><stop offset="0.6667" stop-color="#ffdbe7"/><stop offset="0.75" stop-color="#ffd0dc"/><stop offset="0.8333" stop-color="#ffc7d2"/><stop offset="0.9167" stop-color="#ffbec9"/><stop offset="1.0" stop-color="#ffb6c0"/></linearGradient>
<linearGradient id="cbr6" x1="0" y1="0" x2="1" y2="0"><stop offset="0.0" stop-color="#b4e7ff"/><stop offset="0.0833" stop-color="#bfe7ff"/><stop offset="0.1667" stop-color="#cbe6ff"/><stop offset="0.25" stop-color="#d7e6ff"/><stop offset="0.3333" stop-color="#e3e6ff"/><stop offset="0.4167" stop-color="#f0e5ff"/><stop offset="0.5" stop-color="#fde5ff"/><stop offset="0.5833" stop-color="#ffdbf4"/><stop offset="0.6667" stop-color="#ffd0e8"/><stop offset="0.75" stop-color="#ffc7de"/><stop offset="0.8333" stop-color="#ffbed4"/><stop offset="0.9167" stop-color="#ffb5cb"/><stop offset="1.0" stop-color="#ffadc2"/></linearGradient>
<linearGradient id="cbr7" x1="0" y1="0" x2="1" y2="0"><stop offset="0.0" stop-color="#b4dbff"/><stop offset="0.0833" stop-color="#c0dbff"/><stop offset="0.1667" stop-color="#cbdbff"/><stop offset="0.25" stop-color="#d7daff"/><stop offset="0.3333" stop-color="#e3daff"/><stop offset="0.4167" stop-color="#f0d9ff"/><stop offset="0.5" stop-color="#fcd9ff"/><stop offset="0.5833" stop-color="#ffd0f5"/><stop offset="0.6667" stop-color="#ffc6ea"/><stop offset="0.75" stop-color="#ffbddf"/><stop offset="0.8333" stop-color="#ffb4d5"/><stop offset="0.9167" stop-color="#ffaccc"/><stop offset="1.0" stop-color="#ffa5c4"/></linearGradient>
<linearGradient id="cbr8" x1="0" y1="0" x2="1" y2="0"><stop offset="0.0" stop-color="#b5d1ff"/><stop offset="0.0833" stop-color="#c0d0ff"/><stop offset="0.1667" stop-color="#ccd0ff"/><stop offset="0.25" stop-color="#d7cfff"/><stop offset="0.3333" stop-color="#e3ceff"/><stop offset="0.4167" stop-color="#efceff"/><stop offset="0.5" stop-color="#fbcdff"/><stop offset="0.5833" stop-color="#ffc6f6"/><stop offset="0.6667" stop-color="#ffbceb"/><stop offset="0.75" stop-color="#ffb4e0"/><stop offset="0.8333" stop-color="#ffacd7"/><stop offset="0.9167" stop-color="#ffa4ce"/><stop offset="1.0" stop-color="#ff9dc5"/></linearGradient>
<linearGradient id="cbm" x1="0" y1="0" x2="0" y2="1"><stop offset="0" stop-color="#000"/><stop offset="1" stop-color="#fff"/></linearGradient>
<mask id="cbk0" maskUnits="userSpaceOnUse" x="2165" y="1029.00" width="314" height="34.00"><rect x="2165" y="1029.00" width="314" height="34.00" fill="url(#cbm)"/></mask>
<mask id="cbk1" maskUnits="userSpaceOnUse" x="2165" y="1063.00" width="314" height="34.00"><rect x="2165" y="1063.00" width="314" height="34.00" fill="url(#cbm)"/></mask>
<mask id="cbk2" maskUnits="userSpaceOnUse" x="2165" y="1097.00" width="314" height="34.00"><rect x="2165" y="1097.00" width="314" height="34.00" fill="url(#cbm)"/></mask>
<mask id="cbk3" maskUnits="userSpaceOnUse" x="2165" y="1131.00" width="314" height="34.00"><rect x="2165" y="1131.00" width="314" height="34.00" fill="url(#cbm)"/></mask>
<mask id="cbk4" maskUnits="userSpaceOnUse" x="2165" y="1165.00" width="314" height="33.00"><rect x="2165" y="1165.00" width="314" height="33.00" fill="url(#cbm)"/></mask>
<mask id="cbk5" maskUnits="userSpaceOnUse" x="2165" y="1198.00" width="314" height="34.00"><rect x="2165" y="1198.00" width="314" height="34.00" fill="url(#cbm)"/></mask>
<mask id="cbk6" maskUnits="userSpaceOnUse" x="2165" y="1232.00" width="314" height="34.00"><rect x="2165" y="1232.00" width="314" height="34.00" fill="url(#cbm)"/></mask>
<mask id="cbk7" maskUnits="userSpaceOnUse" x="2165" y="1266.00" width="314" height="34.00"><rect x="2165" y="1266.00" width="314" height="34.00" fill="url(#cbm)"/></mask>
<linearGradient id="gBot" x1="0" y1="0" x2="0" y2="1"><stop offset="0" stop-color="#4b4b4b"/><stop offset="1" stop-color="#3a3a3a"/></linearGradient>
<linearGradient id="gThumb" x1="0" y1="0" x2="0" y2="1"><stop offset="0" stop-color="#a6a6a6"/><stop offset="1" stop-color="#7e7e7e"/></linearGradient>
<linearGradient id="gTB" x1="0" y1="0" x2="0" y2="1"><stop offset="0" stop-color="#aaaaaa"/><stop offset="1" stop-color="#6a6a6a"/></linearGradient>
<linearGradient id="gTBc" x1="0" y1="0" x2="0" y2="1"><stop offset="0" stop-color="#707070"/><stop offset="1" stop-color="#989898"/></linearGradient>
</defs>
<rect x="0.00" y="0.00" width="2560.00" height="1343.00" fill="#323232"/>
<rect x="0.00" y="0.00" width="2560.00" height="65.50" fill="#222222"/>
<rect x="0.00" y="65.50" width="1.60" height="1277.50" fill="#3a313d"/>
<rect x="191.00" y="12.00" width="2369.00" height="5.50" fill="url(#rainbow)"/>
<path d="M2 0 H184 V25.5 a4 4 0 0 1 -4 4 H6 a4 4 0 0 1 -4 -4 Z" fill="url(#gLogo)" stroke="#5a2020" stroke-width="0.8"/>
<g transform="translate(35.3 14.4)"><rect x="-7.9" y="-7.9" width="15.8" height="15.8" rx="1.2" transform="rotate(45)" fill="none" stroke="#fff" stroke-width="2.3"/><g fill="#fff"><rect x="-1.9" y="-1.9" width="3.8" height="3.8" rx="0.8" transform="translate(0 -4.1) rotate(45)"/><rect x="-1.9" y="-1.9" width="3.8" height="3.8" rx="0.8" transform="translate(0 4.3) rotate(45)"/><rect x="-1.9" y="-1.9" width="3.8" height="3.8" rx="0.8" transform="translate(-4.1 0) rotate(45)"/><rect x="-1.9" y="-1.9" width="3.8" height="3.8" rx="0.8" transform="translate(4.1 0) rotate(45)"/></g></g>
<text x="50.6" y="20.9" font-size="25" fill="#fff" textLength="86" lengthAdjust="spacingAndGlyphs">calman</text>
<circle cx="167.3" cy="14.5" r="10" fill="#d61e1e"/><path d="M167.3 14.5 m-10 0 a10 10 0 0 0 20 0 Z" fill="#e03c3c" opacity="0.8"/>
<path d="M162.6 12.8 h9.4 l-4.7 5 z" fill="#fff"/>
<path d="M0 35.5 H24 a4 4 0 0 1 4 4 V58.5 a4 4 0 0 1 -4 4 H0 Z" fill="url(#gBtn)" stroke="#c0c0c0" stroke-width="1"/>
<circle cx="13.6" cy="49.6" r="10" fill="url(#gCirc)"/>
<path d="M10.6 43.6 v10.6 l6 -5.3 z" fill="#fff"/>
<path d="M30.5 66 V39.5 a4 4 0 0 1 4 -4 H117.5 a4 4 0 0 1 4 4 V66" fill="#3b3b3b" stroke="#5c5c5c" stroke-width="1"/>
<line x1="88.50" x2="88.50" y1="36.00" y2="65.50" stroke="#5c5c5c" stroke-width="1"/>
<text x="36.0" y="55.2" font-size="11.57" fill="#dcdcdc" text-anchor="start" textLength="47.0" lengthAdjust="spacingAndGlyphs">History 1</text>
<circle cx="104" cy="53" r="10" fill="#333"/>
<path d="M101.4 53.2 h5.2 M104 50.6 v5.2" stroke="#5e5e5e" stroke-width="1.2" fill="none"/>
<path d="M2082 65.5 V39.5 a4 4 0 0 1 4 -4 H2207 a5 5 0 0 1 5 5 V65.5 Z" fill="url(#gTool)"/>
<path d="M2082 65.5 V39.5 a4 4 0 0 1 4 -4 H2088 V65.5 Z" fill="#e6e600"/>
<circle cx="2195.4" cy="50" r="9.5" fill="url(#gTCirc)"/>
<path d="M2190.7000000000003 48.8 h9.4 l-4.7 5.2 z" fill="#fff"/>
<text x="2090.6" y="46.6" font-size="11.14" fill="#ececec" text-anchor="start" textLength="82.0" lengthAdjust="spacingAndGlyphs">Simulated Meter</text>
<text x="2090.6" y="61.2" font-size="11.14" fill="#ececec" text-anchor="start" textLength="49.0" lengthAdjust="spacingAndGlyphs">Simulated</text>
<path d="M2218 65.5 V39.5 a4 4 0 0 1 4 -4 H2343 a5 5 0 0 1 5 5 V65.5 Z" fill="url(#gTool)"/>
<path d="M2218 65.5 V39.5 a4 4 0 0 1 4 -4 H2224 V65.5 Z" fill="#e6e600"/>
<circle cx="2331.2" cy="50" r="9.5" fill="url(#gTCirc)"/>
<path d="M2326.5 48.8 h9.4 l-4.7 5.2 z" fill="#fff"/>
<text x="2226.6" y="46.6" font-size="11.14" fill="#ececec" text-anchor="start" textLength="33.5" lengthAdjust="spacingAndGlyphs">Source</text>
<path d="M2354 65.5 V39.5 a4 4 0 0 1 4 -4 H2492 a5 5 0 0 1 5 5 V65.5 Z" fill="url(#gTool)"/>
<path d="M2354 65.5 V39.5 a4 4 0 0 1 4 -4 H2360 V65.5 Z" fill="#e6e600"/>
<circle cx="2481" cy="50" r="9.5" fill="url(#gTCirc)"/>
<path d="M2476.3 48.8 h9.4 l-4.7 5.2 z" fill="#fff"/>
<text x="2362.6" y="46.6" font-size="11.14" fill="#ececec" text-anchor="start" textLength="106.0" lengthAdjust="spacingAndGlyphs">Direct Display Control</text>
<rect x="2500.5" y="35.5" width="33" height="27.5" rx="4.5" fill="url(#gBtn2)" stroke="#bdbdbd" stroke-width="1"/>
<rect x="2535.5" y="35.5" width="33" height="27.5" rx="4.5" fill="url(#gBtn2)" stroke="#bdbdbd" stroke-width="1"/>
<circle cx="2516.8" cy="49.2" r="9.5" fill="url(#gTCirc)"/>
<circle cx="2548.2" cy="49.2" r="9.5" fill="url(#gTCirc)"/>
<g transform="translate(2516.8 49.2)" fill="none" stroke="#e4e4e4"><circle r="3.6" stroke-width="1.7"/><line x1="0" y1="-4.2" x2="0" y2="-6.4" stroke-width="2.2" transform="rotate(0)"/><line x1="0" y1="-4.2" x2="0" y2="-6.4" stroke-width="2.2" transform="rotate(45)"/><line x1="0" y1="-4.2" x2="0" y2="-6.4" stroke-width="2.2" transform="rotate(90)"/><line x1="0" y1="-4.2" x2="0" y2="-6.4" stroke-width="2.2" transform="rotate(135)"/><line x1="0" y1="-4.2" x2="0" y2="-6.4" stroke-width="2.2" transform="rotate(180)"/><line x1="0" y1="-4.2" x2="0" y2="-6.4" stroke-width="2.2" transform="rotate(225)"/><line x1="0" y1="-4.2" x2="0" y2="-6.4" stroke-width="2.2" transform="rotate(270)"/><line x1="0" y1="-4.2" x2="0" y2="-6.4" stroke-width="2.2" transform="rotate(315)"/></g>
<path d="M2550.6 44 v10.4 l-6 -5.2 z" fill="#fff"/>
<rect x="68.50" y="129.00" width="791.00" height="61.70" fill="#282828"/>
<rect x="71.00" y="131.60" width="785.70" height="56.20" fill="url(#gDrop)"/>
<text x="80.0" y="173.8" font-size="33.43" fill="#f2f2f2" text-anchor="start" textLength="403.0" lengthAdjust="spacingAndGlyphs">6-Step Near Black (0%-5%)</text>
<path d="M826.5 155.4 H846 L836.2 166.6 Z" fill="#000"/>
<text x="99.5" y="262.8" font-size="37.57" fill="#f2f2f2" text-anchor="start" textLength="332.0" lengthAdjust="spacingAndGlyphs">Y Min: 0,046 cd/m²</text>
<text x="503.5" y="262.8" font-size="37.57" fill="#f2f2f2" text-anchor="start" textLength="316.0" lengthAdjust="spacingAndGlyphs">Y Max: 67,1 cd/m²</text>
<rect x="922.00" y="85.00" width="1026.00" height="22.00" fill="#2e2e2e"/>
<rect x="922.00" y="107.00" width="1026.00" height="21.00" fill="url(#gHdr)"/>
<rect x="922.00" y="85.00" width="20.00" height="43.00" fill="#000"/>
<rect x="922.00" y="128.00" width="1026.00" height="39.30" fill="#414141"/>
<rect x="922.00" y="128.00" width="20.00" height="39.30" fill="url(#gRowL)"/>
<rect x="922.00" y="167.30" width="1026.00" height="39.50" fill="#7f7f7f"/>
<rect x="922.00" y="167.30" width="20.00" height="39.50" fill="url(#gRowL)"/>
<rect x="922.00" y="206.80" width="1026.00" height="39.20" fill="#414141"/>
<rect x="922.00" y="206.80" width="20.00" height="39.20" fill="url(#gRowL)"/>
<rect x="922.00" y="246.00" width="1026.00" height="39.80" fill="#7f7f7f"/>
<rect x="922.00" y="246.00" width="20.00" height="39.80" fill="url(#gRowL)"/>
<rect x="922.00" y="285.80" width="1026.00" height="22.90" fill="#414141"/>
<rect x="922.00" y="285.80" width="20.00" height="22.90" fill="url(#gRowL)"/>
<text x="1147.2" y="114.2" font-size="19.86" fill="#f4f4f4" text-anchor="start" textLength="12.5" lengthAdjust="spacingAndGlyphs">0</text>
<text x="1247.9" y="114.2" font-size="19.86" fill="#f4f4f4" text-anchor="start" textLength="31.0" lengthAdjust="spacingAndGlyphs">0,5</text>
<text x="1348.6" y="114.2" font-size="19.86" fill="#f4f4f4" text-anchor="start" textLength="12.5" lengthAdjust="spacingAndGlyphs">1</text>
<text x="1449.3" y="114.2" font-size="19.86" fill="#f4f4f4" text-anchor="start" textLength="12.5" lengthAdjust="spacingAndGlyphs">2</text>
<text x="1550.0" y="114.2" font-size="19.86" fill="#f4f4f4" text-anchor="start" textLength="12.5" lengthAdjust="spacingAndGlyphs">3</text>
<text x="1650.7" y="114.2" font-size="19.86" fill="#f4f4f4" text-anchor="start" textLength="12.5" lengthAdjust="spacingAndGlyphs">4</text>
<text x="1751.4" y="114.2" font-size="19.86" fill="#f4f4f4" text-anchor="start" textLength="12.5" lengthAdjust="spacingAndGlyphs">5</text>
<text x="1852.1" y="114.2" font-size="19.86" fill="#f4f4f4" text-anchor="start" textLength="37.5" lengthAdjust="spacingAndGlyphs">100</text>
<clipPath id="clipTable"><rect x="922" y="85" width="1026" height="223.7"/></clipPath>
<g clip-path="url(#clipTable)">
<text x="948.0" y="156.3" font-size="24.29" fill="#f4f4f4" text-anchor="start" textLength="84.0" lengthAdjust="spacingAndGlyphs">x: CIE31</text>
<text x="1148.0" y="156.3" font-size="24.29" fill="#f4f4f4" text-anchor="start" textLength="72.2" lengthAdjust="spacingAndGlyphs">0,3234</text>
<text x="1248.7" y="156.3" font-size="24.29" fill="#f4f4f4" text-anchor="start" textLength="72.2" lengthAdjust="spacingAndGlyphs">0,3233</text>
<text x="1349.4" y="156.3" font-size="24.29" fill="#f4f4f4" text-anchor="start" textLength="72.2" lengthAdjust="spacingAndGlyphs">0,3277</text>
<text x="1450.1" y="156.3" font-size="24.29" fill="#f4f4f4" text-anchor="start" textLength="72.2" lengthAdjust="spacingAndGlyphs">0,3211</text>
<text x="1550.8" y="156.3" font-size="24.29" fill="#f4f4f4" text-anchor="start" textLength="72.2" lengthAdjust="spacingAndGlyphs">0,3214</text>
<text x="1651.5" y="156.3" font-size="24.29" fill="#f4f4f4" text-anchor="start" textLength="72.2" lengthAdjust="spacingAndGlyphs">0,3118</text>
<text x="1752.2" y="156.3" font-size="24.29" fill="#f4f4f4" text-anchor="start" textLength="72.2" lengthAdjust="spacingAndGlyphs">0,3161</text>
<text x="1852.9" y="156.3" font-size="24.29" fill="#f4f4f4" text-anchor="start" textLength="72.2" lengthAdjust="spacingAndGlyphs">0,3131</text>
<text x="948.0" y="195.8" font-size="24.29" fill="#f4f4f4" text-anchor="start" textLength="84.0" lengthAdjust="spacingAndGlyphs">y: CIE31</text>
<text x="1148.0" y="195.8" font-size="24.29" fill="#f4f4f4" text-anchor="start" textLength="72.2" lengthAdjust="spacingAndGlyphs">0,2451</text>
<text x="1248.7" y="195.8" font-size="24.29" fill="#f4f4f4" text-anchor="start" textLength="72.2" lengthAdjust="spacingAndGlyphs">0,2515</text>
<text x="1349.4" y="195.8" font-size="24.29" fill="#f4f4f4" text-anchor="start" textLength="72.2" lengthAdjust="spacingAndGlyphs">0,2599</text>
<text x="1450.1" y="195.8" font-size="24.29" fill="#f4f4f4" text-anchor="start" textLength="72.2" lengthAdjust="spacingAndGlyphs">0,2741</text>
<text x="1550.8" y="195.8" font-size="24.29" fill="#f4f4f4" text-anchor="start" textLength="72.2" lengthAdjust="spacingAndGlyphs">0,2938</text>
<text x="1651.5" y="195.8" font-size="24.29" fill="#f4f4f4" text-anchor="start" textLength="72.2" lengthAdjust="spacingAndGlyphs">0,3047</text>
<text x="1752.2" y="195.8" font-size="24.29" fill="#f4f4f4" text-anchor="start" textLength="72.2" lengthAdjust="spacingAndGlyphs">0,3150</text>
<text x="1852.9" y="195.8" font-size="24.29" fill="#f4f4f4" text-anchor="start" textLength="72.2" lengthAdjust="spacingAndGlyphs">0,3284</text>
<text x="948.0" y="235.2" font-size="24.29" fill="#f4f4f4" text-anchor="start" textLength="88.0" lengthAdjust="spacingAndGlyphs">Y cd/m²</text>
<text x="1148.0" y="235.2" font-size="24.29" fill="#f4f4f4" text-anchor="start" textLength="72.2" lengthAdjust="spacingAndGlyphs">0,0460</text>
<text x="1248.7" y="235.2" font-size="24.29" fill="#f4f4f4" text-anchor="start" textLength="72.2" lengthAdjust="spacingAndGlyphs">0,0477</text>
<text x="1349.4" y="235.2" font-size="24.29" fill="#f4f4f4" text-anchor="start" textLength="72.2" lengthAdjust="spacingAndGlyphs">0,0512</text>
<text x="1450.1" y="235.2" font-size="24.29" fill="#f4f4f4" text-anchor="start" textLength="72.2" lengthAdjust="spacingAndGlyphs">0,0814</text>
<text x="1550.8" y="235.2" font-size="24.29" fill="#f4f4f4" text-anchor="start" textLength="72.2" lengthAdjust="spacingAndGlyphs">0,1578</text>
<text x="1651.5" y="235.2" font-size="24.29" fill="#f4f4f4" text-anchor="start" textLength="72.2" lengthAdjust="spacingAndGlyphs">0,2178</text>
<text x="1752.2" y="235.2" font-size="24.29" fill="#f4f4f4" text-anchor="start" textLength="72.2" lengthAdjust="spacingAndGlyphs">0,2998</text>
<text x="1852.9" y="235.2" font-size="24.29" fill="#f4f4f4" text-anchor="start" textLength="85.0" lengthAdjust="spacingAndGlyphs">67,1254</text>
<text x="948.0" y="274.7" font-size="24.29" fill="#f4f4f4" text-anchor="start" textLength="162.0" lengthAdjust="spacingAndGlyphs">Target Y cd/m²</text>
<text x="1148.0" y="274.7" font-size="24.29" fill="#f4f4f4" text-anchor="start" textLength="72.2" lengthAdjust="spacingAndGlyphs">0,0460</text>
<text x="1248.7" y="274.7" font-size="24.29" fill="#f4f4f4" text-anchor="start" textLength="72.2" lengthAdjust="spacingAndGlyphs">0,0566</text>
<text x="1349.4" y="274.7" font-size="24.29" fill="#f4f4f4" text-anchor="start" textLength="72.2" lengthAdjust="spacingAndGlyphs">0,0685</text>
<text x="1450.1" y="274.7" font-size="24.29" fill="#f4f4f4" text-anchor="start" textLength="72.2" lengthAdjust="spacingAndGlyphs">0,0965</text>
<text x="1550.8" y="274.7" font-size="24.29" fill="#f4f4f4" text-anchor="start" textLength="72.2" lengthAdjust="spacingAndGlyphs">0,1493</text>
<text x="1651.5" y="274.7" font-size="24.29" fill="#f4f4f4" text-anchor="start" textLength="72.2" lengthAdjust="spacingAndGlyphs">0,1921</text>
<text x="1752.2" y="274.7" font-size="24.29" fill="#f4f4f4" text-anchor="start" textLength="72.2" lengthAdjust="spacingAndGlyphs">0,2413</text>
<text x="1852.9" y="274.7" font-size="24.29" fill="#f4f4f4" text-anchor="start" textLength="85.0" lengthAdjust="spacingAndGlyphs">67,1254</text>
<text x="948.0" y="314.1" font-size="24.29" fill="#f4f4f4" text-anchor="start" textLength="184.0" lengthAdjust="spacingAndGlyphs">Gamma Log/Log</text>
<text x="1148.0" y="314.1" font-size="24.29" fill="#f4f4f4" text-anchor="start" textLength="72.2" lengthAdjust="spacingAndGlyphs">0,7906</text>
<text x="1248.7" y="314.1" font-size="24.29" fill="#f4f4f4" text-anchor="start" textLength="72.2" lengthAdjust="spacingAndGlyphs">1,3454</text>
<text x="1349.4" y="314.1" font-size="24.29" fill="#f4f4f4" text-anchor="start" textLength="72.2" lengthAdjust="spacingAndGlyphs">1,5286</text>
<text x="1450.1" y="314.1" font-size="24.29" fill="#f4f4f4" text-anchor="start" textLength="72.2" lengthAdjust="spacingAndGlyphs">1,6777</text>
<text x="1550.8" y="314.1" font-size="24.29" fill="#f4f4f4" text-anchor="start" textLength="72.2" lengthAdjust="spacingAndGlyphs">1,7579</text>
<text x="1651.5" y="314.1" font-size="24.29" fill="#f4f4f4" text-anchor="start" textLength="72.2" lengthAdjust="spacingAndGlyphs">1,7955</text>
<text x="1752.2" y="314.1" font-size="24.29" fill="#f4f4f4" text-anchor="start" textLength="72.2" lengthAdjust="spacingAndGlyphs">1,8090</text>
<text x="1852.9" y="314.1" font-size="24.29" fill="#f4f4f4" text-anchor="start" textLength="72.2" lengthAdjust="spacingAndGlyphs">2,2847</text>
</g>
<rect x="1948.8" y="128.3" width="24" height="180" rx="5" fill="url(#gSB)"/>
<rect x="1951" y="130.5" width="20" height="19.7" rx="4" fill="#8e8e8e"/>
<rect x="1951" y="286.8" width="20" height="19.7" rx="4" fill="#8e8e8e"/>
<path d="M1953.5 145.5 L1961 136.5 L1968.5 145.5 Z" fill="#555"/>
<path d="M1953.5 292 L1961 301 L1968.5 292 Z" fill="#555"/>
<rect x="1951" y="154.6" width="20" height="83" rx="9" fill="#484848"/>
<text x="398.0" y="347.0" font-size="22.43" fill="#f0f0f0" text-anchor="start" textLength="131.5" lengthAdjust="spacingAndGlyphs">RGB Balance</text>
<rect x="51.30" y="354.60" width="806.00" height="256.20" fill="#232323"/>
<line x1="51.30" x2="857.30" y1="418.90" y2="418.90" stroke="#9c9c9c" stroke-width="2"/>
<line x1="51.30" x2="857.30" y1="483.10" y2="483.10" stroke="#9c9c9c" stroke-width="2"/>
<line x1="51.30" x2="857.30" y1="547.50" y2="547.50" stroke="#9c9c9c" stroke-width="2"/>
<clipPath id="clipBal"><rect x="49.3" y="354.6" width="808.0" height="256.19999999999993"/></clipPath>
<g clip-path="url(#clipBal)" fill="none" stroke-width="4.2" stroke-linejoin="round">
<polyline points="51.3,502.7 59.4,523.2 67.4,522.6 75.5,488.6 83.5,458.4 91.6,424.3 857.3,491.5" stroke="#008000"/>
<polyline points="51.3,431.1 59.4,454.2 67.4,447.1 75.5,397.0 83.5,407.0 91.6,356.2 857.3,449.7" stroke="#ff0000"/>
<polyline points="51.3,439.4 59.4,467.4 67.4,458.0 75.5,418.9 83.5,394.8 91.6,371.6 857.3,471.2" stroke="#0000ff"/>
</g>
<rect x="51.30" y="354.60" width="806.60" height="256.20" fill="none" stroke="#9e9e9e" stroke-width="2.2"/>
<line x1="43.00" x2="51.30" y1="354.60" y2="354.60" stroke="#dcdcdc" stroke-width="2"/>
<text x="30.3" y="361.7" font-size="20.29" fill="#dcdcdc" text-anchor="start" textLength="11.5" lengthAdjust="spacingAndGlyphs">4</text>
<line x1="43.00" x2="51.30" y1="418.90" y2="418.90" stroke="#dcdcdc" stroke-width="2"/>
<text x="30.3" y="426.0" font-size="20.29" fill="#dcdcdc" text-anchor="start" textLength="11.5" lengthAdjust="spacingAndGlyphs">2</text>
<line x1="43.00" x2="51.30" y1="483.10" y2="483.10" stroke="#dcdcdc" stroke-width="2"/>
<text x="30.3" y="490.2" font-size="20.29" fill="#dcdcdc" text-anchor="start" textLength="11.5" lengthAdjust="spacingAndGlyphs">0</text>
<line x1="43.00" x2="51.30" y1="547.50" y2="547.50" stroke="#dcdcdc" stroke-width="2"/>
<text x="22.8" y="554.6" font-size="20.29" fill="#dcdcdc" text-anchor="start" textLength="19.0" lengthAdjust="spacingAndGlyphs">-2</text>
<line x1="43.00" x2="51.30" y1="610.80" y2="610.80" stroke="#dcdcdc" stroke-width="2"/>
<text x="22.8" y="620.7" font-size="20.29" fill="#dcdcdc" text-anchor="start" textLength="19.0" lengthAdjust="spacingAndGlyphs">-4</text>
<line x1="51.30" x2="51.30" y1="610.80" y2="620.00" stroke="#dcdcdc" stroke-width="2"/>
<text x="45.6" y="644.0" font-size="20.57" fill="#dcdcdc" text-anchor="start" textLength="12.0" lengthAdjust="spacingAndGlyphs">0</text>
<line x1="131.90" x2="131.90" y1="610.80" y2="620.00" stroke="#dcdcdc" stroke-width="2"/>
<text x="120.2" y="644.0" font-size="20.57" fill="#dcdcdc" text-anchor="start" textLength="24.0" lengthAdjust="spacingAndGlyphs">10</text>
<line x1="212.50" x2="212.50" y1="610.80" y2="620.00" stroke="#dcdcdc" stroke-width="2"/>
<text x="200.8" y="644.0" font-size="20.57" fill="#dcdcdc" text-anchor="start" textLength="24.0" lengthAdjust="spacingAndGlyphs">20</text>
<line x1="293.10" x2="293.10" y1="610.80" y2="620.00" stroke="#dcdcdc" stroke-width="2"/>
<text x="281.4" y="644.0" font-size="20.57" fill="#dcdcdc" text-anchor="start" textLength="24.0" lengthAdjust="spacingAndGlyphs">30</text>
<line x1="373.70" x2="373.70" y1="610.80" y2="620.00" stroke="#dcdcdc" stroke-width="2"/>
<text x="362.0" y="644.0" font-size="20.57" fill="#dcdcdc" text-anchor="start" textLength="24.0" lengthAdjust="spacingAndGlyphs">40</text>
<line x1="454.30" x2="454.30" y1="610.80" y2="620.00" stroke="#dcdcdc" stroke-width="2"/>
<text x="442.6" y="644.0" font-size="20.57" fill="#dcdcdc" text-anchor="start" textLength="24.0" lengthAdjust="spacingAndGlyphs">50</text>
<line x1="534.90" x2="534.90" y1="610.80" y2="620.00" stroke="#dcdcdc" stroke-width="2"/>
<text x="523.2" y="644.0" font-size="20.57" fill="#dcdcdc" text-anchor="start" textLength="24.0" lengthAdjust="spacingAndGlyphs">60</text>
<line x1="615.50" x2="615.50" y1="610.80" y2="620.00" stroke="#dcdcdc" stroke-width="2"/>
<text x="603.8" y="644.0" font-size="20.57" fill="#dcdcdc" text-anchor="start" textLength="24.0" lengthAdjust="spacingAndGlyphs">70</text>
<line x1="696.10" x2="696.10" y1="610.80" y2="620.00" stroke="#dcdcdc" stroke-width="2"/>
<text x="684.4" y="644.0" font-size="20.57" fill="#dcdcdc" text-anchor="start" textLength="24.0" lengthAdjust="spacingAndGlyphs">80</text>
<line x1="776.70" x2="776.70" y1="610.80" y2="620.00" stroke="#dcdcdc" stroke-width="2"/>
<text x="765.0" y="644.0" font-size="20.57" fill="#dcdcdc" text-anchor="start" textLength="24.0" lengthAdjust="spacingAndGlyphs">90</text>
<line x1="857.30" x2="857.30" y1="610.80" y2="620.00" stroke="#dcdcdc" stroke-width="2"/>
<text x="839.6" y="644.0" font-size="20.57" fill="#dcdcdc" text-anchor="start" textLength="36.0" lengthAdjust="spacingAndGlyphs">100</text>
<text x="1238.1" y="347.0" font-size="22.43" fill="#f0f0f0" text-anchor="start" textLength="163.0" lengthAdjust="spacingAndGlyphs">RGB Luminance</text>
<rect x="922.20" y="352.40" width="793.60" height="265.80" fill="#232323"/>
<line x1="922.20" x2="1715.80" y1="421.70" y2="421.70" stroke="#9c9c9c" stroke-width="2"/>
<line x1="922.20" x2="1715.80" y1="490.80" y2="490.80" stroke="#9c9c9c" stroke-width="2"/>
<line x1="922.20" x2="1715.80" y1="561.00" y2="561.00" stroke="#9c9c9c" stroke-width="2"/>
<rect x="932.60" y="589.30" width="18.95" height="28.40" fill="url(#gb0_0)" stroke="#000" stroke-width="2.0"/>
<rect x="953.55" y="589.30" width="18.95" height="28.40" fill="url(#gb0_1)" stroke="#000" stroke-width="2.0"/>
<rect x="974.50" y="589.30" width="18.95" height="28.40" fill="url(#gb0_2)" stroke="#000" stroke-width="2.0"/>
<rect x="995.45" y="589.30" width="18.95" height="28.40" fill="url(#gb0_3)" stroke="#000" stroke-width="2.0"/>
<rect x="1031.75" y="527.30" width="18.95" height="90.40" fill="url(#gb1_0)" stroke="#000" stroke-width="2.0"/>
<rect x="1052.70" y="503.70" width="18.95" height="114.00" fill="url(#gb1_1)" stroke="#000" stroke-width="2.0"/>
<rect x="1073.65" y="525.30" width="18.95" height="92.40" fill="url(#gb1_2)" stroke="#000" stroke-width="2.0"/>
<rect x="1094.60" y="512.60" width="18.95" height="105.10" fill="url(#gb1_3)" stroke="#000" stroke-width="2.0"/>
<rect x="1130.90" y="503.70" width="18.95" height="114.00" fill="url(#gb2_0)" stroke="#000" stroke-width="2.0"/>
<rect x="1151.85" y="477.20" width="18.95" height="140.50" fill="url(#gb2_1)" stroke="#000" stroke-width="2.0"/>
<rect x="1172.80" y="500.00" width="18.95" height="117.70" fill="url(#gb2_2)" stroke="#000" stroke-width="2.0"/>
<rect x="1193.75" y="488.00" width="18.95" height="129.70" fill="url(#gb2_3)" stroke="#000" stroke-width="2.0"/>
<rect x="1230.05" y="481.50" width="18.95" height="136.20" fill="url(#gb3_0)" stroke="#000" stroke-width="2.0"/>
<rect x="1251.00" y="458.20" width="18.95" height="159.50" fill="url(#gb3_1)" stroke="#000" stroke-width="2.0"/>
<rect x="1271.95" y="479.00" width="18.95" height="138.70" fill="url(#gb3_2)" stroke="#000" stroke-width="2.0"/>
<rect x="1292.90" y="467.00" width="18.95" height="150.70" fill="url(#gb3_3)" stroke="#000" stroke-width="2.0"/>
<rect x="1329.20" y="467.10" width="18.95" height="150.60" fill="url(#gb4_0)" stroke="#000" stroke-width="2.0"/>
<rect x="1350.15" y="450.50" width="18.95" height="167.20" fill="url(#gb4_1)" stroke="#000" stroke-width="2.0"/>
<rect x="1371.10" y="465.10" width="18.95" height="152.60" fill="url(#gb4_2)" stroke="#000" stroke-width="2.0"/>
<rect x="1392.05" y="454.90" width="18.95" height="162.80" fill="url(#gb4_3)" stroke="#000" stroke-width="2.0"/>
<rect x="1428.35" y="457.30" width="18.95" height="160.40" fill="url(#gb5_0)" stroke="#000" stroke-width="2.0"/>
<rect x="1449.30" y="446.30" width="18.95" height="171.40" fill="url(#gb5_1)" stroke="#000" stroke-width="2.0"/>
<rect x="1470.25" y="457.30" width="18.95" height="160.40" fill="url(#gb5_2)" stroke="#000" stroke-width="2.0"/>
<rect x="1491.20" y="450.30" width="18.95" height="167.40" fill="url(#gb5_3)" stroke="#000" stroke-width="2.0"/>
<rect x="1527.50" y="454.90" width="18.95" height="162.80" fill="url(#gb6_0)" stroke="#000" stroke-width="2.0"/>
<rect x="1548.45" y="446.30" width="18.95" height="171.40" fill="url(#gb6_1)" stroke="#000" stroke-width="2.0"/>
<rect x="1569.40" y="452.60" width="18.95" height="165.10" fill="url(#gb6_2)" stroke="#000" stroke-width="2.0"/>
<rect x="1590.35" y="448.70" width="18.95" height="169.00" fill="url(#gb6_3)" stroke="#000" stroke-width="2.0"/>
<rect x="1626.65" y="383.80" width="18.95" height="233.90" fill="url(#gb7_0)" stroke="#000" stroke-width="2.0"/>
<rect x="1647.60" y="379.60" width="18.95" height="238.10" fill="url(#gb7_1)" stroke="#000" stroke-width="2.0"/>
<rect x="1668.55" y="381.80" width="18.95" height="235.90" fill="url(#gb7_2)" stroke="#000" stroke-width="2.0"/>
<rect x="1689.50" y="381.80" width="18.95" height="235.90" fill="url(#gb7_3)" stroke="#000" stroke-width="2.0"/>
<rect x="922.20" y="352.40" width="793.60" height="265.80" fill="none" stroke="#9c9c9c" stroke-width="2"/>
<polyline fill="none" stroke="#ffff00" stroke-width="4" points="970.5,589 1069.3,515.4 1169,496.2 1267.5,471.6 1368.4,450.2 1467,443.4 1565.3,436.2 1664.5,379.4"/>
<line x1="922.20" x2="922.20" y1="618.20" y2="627.50" stroke="#dcdcdc" stroke-width="2"/>
<line x1="1021.40" x2="1021.40" y1="618.20" y2="627.50" stroke="#dcdcdc" stroke-width="2"/>
<line x1="1120.60" x2="1120.60" y1="618.20" y2="627.50" stroke="#dcdcdc" stroke-width="2"/>
<line x1="1219.80" x2="1219.80" y1="618.20" y2="627.50" stroke="#dcdcdc" stroke-width="2"/>
<line x1="1319.00" x2="1319.00" y1="618.20" y2="627.50" stroke="#dcdcdc" stroke-width="2"/>
<line x1="1418.20" x2="1418.20" y1="618.20" y2="627.50" stroke="#dcdcdc" stroke-width="2"/>
<line x1="1517.40" x2="1517.40" y1="618.20" y2="627.50" stroke="#dcdcdc" stroke-width="2"/>
<line x1="1616.60" x2="1616.60" y1="618.20" y2="627.50" stroke="#dcdcdc" stroke-width="2"/>
<line x1="1715.80" x2="1715.80" y1="618.20" y2="627.50" stroke="#dcdcdc" stroke-width="2"/>
<text x="965.9" y="642.8" font-size="21.14" fill="#dcdcdc" text-anchor="start" textLength="11.8" lengthAdjust="spacingAndGlyphs">0</text>
<text x="1056.3" y="642.8" font-size="21.14" fill="#dcdcdc" text-anchor="start" textLength="29.4" lengthAdjust="spacingAndGlyphs">0,5</text>
<text x="1164.3" y="642.8" font-size="21.14" fill="#dcdcdc" text-anchor="start" textLength="11.8" lengthAdjust="spacingAndGlyphs">1</text>
<text x="1263.5" y="642.8" font-size="21.14" fill="#dcdcdc" text-anchor="start" textLength="11.8" lengthAdjust="spacingAndGlyphs">2</text>
<text x="1362.7" y="642.8" font-size="21.14" fill="#dcdcdc" text-anchor="start" textLength="11.8" lengthAdjust="spacingAndGlyphs">3</text>
<text x="1461.9" y="642.8" font-size="21.14" fill="#dcdcdc" text-anchor="start" textLength="11.8" lengthAdjust="spacingAndGlyphs">4</text>
<text x="1561.1" y="642.8" font-size="21.14" fill="#dcdcdc" text-anchor="start" textLength="11.8" lengthAdjust="spacingAndGlyphs">5</text>
<text x="1648.5" y="642.8" font-size="21.14" fill="#dcdcdc" text-anchor="start" textLength="35.3" lengthAdjust="spacingAndGlyphs">100</text>
<text x="1920.0" y="346.8" font-size="22.43" fill="#f0f0f0" text-anchor="start" textLength="44.0" lengthAdjust="spacingAndGlyphs">RGB</text>
<rect x="1785.60" y="350.40" width="314.80" height="296.00" fill="#232323"/>
<line x1="1785.60" x2="2100.40" y1="426.30" y2="426.30" stroke="#9c9c9c" stroke-width="2"/>
<line x1="1785.60" x2="2100.40" y1="500.30" y2="500.30" stroke="#9c9c9c" stroke-width="2"/>
<line x1="1785.60" x2="2100.40" y1="572.50" y2="572.50" stroke="#9c9c9c" stroke-width="2"/>
<rect x="1817.20" y="494.20" width="81.10" height="151.80" fill="url(#gRedS)" stroke="#000" stroke-width="1.8"/>
<rect x="1900.00" y="504.60" width="81.30" height="141.40" fill="url(#gGreenS)" stroke="#000" stroke-width="1.8"/>
<rect x="1983.00" y="500.50" width="81.60" height="145.50" fill="url(#gBlueS)" stroke="#000" stroke-width="1.8"/>
<rect x="1785.60" y="350.40" width="314.80" height="296.00" fill="none" stroke="#9c9c9c" stroke-width="2"/>
<text x="1829.0" y="638.6" font-size="20.86" fill="#fff" text-anchor="start" textLength="56.0" lengthAdjust="spacingAndGlyphs">101%</text>
<text x="1918.5" y="638.6" font-size="20.86" fill="#fff" text-anchor="start" textLength="44.0" lengthAdjust="spacingAndGlyphs">99%</text>
<text x="1996.5" y="638.6" font-size="20.86" fill="#fff" text-anchor="start" textLength="56.0" lengthAdjust="spacingAndGlyphs">100%</text>
<text x="2237.0" y="346.8" font-size="22.43" fill="#f0f0f0" text-anchor="start" textLength="163.7" lengthAdjust="spacingAndGlyphs">RGB Luminance</text>
<rect x="2163.20" y="349.80" width="315.00" height="296.20" fill="#232323"/>
<line x1="2163.20" x2="2478.20" y1="424.20" y2="424.20" stroke="#9c9c9c" stroke-width="2"/>
<line x1="2163.20" x2="2478.20" y1="499.80" y2="499.80" stroke="#9c9c9c" stroke-width="2"/>
<line x1="2163.20" x2="2478.20" y1="571.60" y2="571.60" stroke="#9c9c9c" stroke-width="2"/>
<rect x="2195.20" y="463.00" width="80.60" height="36.80" fill="url(#gRedQ)" stroke="#000" stroke-width="1.8"/>
<rect x="2278.00" y="499.80" width="81.40" height="10.20" fill="url(#gGreenQ)" stroke="#000" stroke-width="1.8"/>
<rect x="2361.20" y="487.40" width="81.60" height="12.40" fill="url(#gBlueQ)" stroke="#000" stroke-width="1.8"/>
<rect x="2163.20" y="349.80" width="315.00" height="296.20" fill="none" stroke="#9c9c9c" stroke-width="2"/>
<text x="194.0" y="713.5" font-size="22.86" fill="#f0f0f0" text-anchor="start" textLength="149.0" lengthAdjust="spacingAndGlyphs">ΔE 2000:  1,54</text>
<circle cx="365" cy="706.4" r="9.1" fill="url(#gDot)"/>
<text x="621.5" y="713.5" font-size="22.86" fill="#f0f0f0" text-anchor="start" textLength="90.0" lengthAdjust="spacingAndGlyphs">Max: 2,1</text>
<circle cx="744.7" cy="706.4" r="9.1" fill="url(#gDot)"/>
<rect x="65.20" y="719.40" width="794.40" height="222.60" fill="#232323"/>
<line x1="65.20" x2="859.60" y1="756.40" y2="756.40" stroke="#9c9c9c" stroke-width="2"/>
<line x1="65.20" x2="859.60" y1="794.30" y2="794.30" stroke="#9c9c9c" stroke-width="2"/>
<line x1="65.20" x2="859.60" y1="869.20" y2="869.20" stroke="#9c9c9c" stroke-width="2"/>
<line x1="65.20" x2="859.60" y1="831.20" y2="831.20" stroke="#e6e600" stroke-width="2"/>
<rect x="75.80" y="883.00" width="77.80" height="58.50" fill="url(#gBlkDE)" stroke="#000" stroke-width="1.6"/>
<rect x="173.60" y="885.20" width="77.60" height="56.30" fill="url(#gBlkDE)" stroke="#000" stroke-width="1.6"/>
<rect x="273.80" y="887.60" width="77.60" height="53.90" fill="url(#gBlkDE)" stroke="#000" stroke-width="1.6"/>
<rect x="373.60" y="878.80" width="77.40" height="62.70" fill="url(#gBlkDE)" stroke="#000" stroke-width="1.6"/>
<rect x="471.40" y="864.00" width="77.60" height="77.50" fill="url(#gBlkDE)" stroke="#000" stroke-width="1.6"/>
<rect x="571.00" y="883.00" width="77.60" height="58.50" fill="url(#gBlkDE)" stroke="#000" stroke-width="1.6"/>
<rect x="671.00" y="884.80" width="77.80" height="56.70" fill="url(#gBlkDE)" stroke="#000" stroke-width="1.6"/>
<rect x="770.20" y="914.60" width="76.40" height="26.90" fill="url(#gWhtDE)" stroke="#000" stroke-width="1.6"/>
<line x1="64.20" x2="859.60" y1="906.00" y2="906.00" stroke="#0a8a0a" stroke-width="2"/>
<rect x="65.20" y="719.40" width="794.40" height="222.60" fill="none" stroke="#9c9c9c" stroke-width="2"/>
<line x1="65.20" x2="65.20" y1="942.00" y2="951.50" stroke="#dcdcdc" stroke-width="2"/>
<line x1="164.50" x2="164.50" y1="942.00" y2="951.50" stroke="#dcdcdc" stroke-width="2"/>
<line x1="263.80" x2="263.80" y1="942.00" y2="951.50" stroke="#dcdcdc" stroke-width="2"/>
<line x1="363.10" x2="363.10" y1="942.00" y2="951.50" stroke="#dcdcdc" stroke-width="2"/>
<line x1="462.40" x2="462.40" y1="942.00" y2="951.50" stroke="#dcdcdc" stroke-width="2"/>
<line x1="561.70" x2="561.70" y1="942.00" y2="951.50" stroke="#dcdcdc" stroke-width="2"/>
<line x1="661.00" x2="661.00" y1="942.00" y2="951.50" stroke="#dcdcdc" stroke-width="2"/>
<line x1="760.30" x2="760.30" y1="942.00" y2="951.50" stroke="#dcdcdc" stroke-width="2"/>
<line x1="859.60" x2="859.60" y1="942.00" y2="951.50" stroke="#dcdcdc" stroke-width="2"/>
<text x="108.2" y="967.5" font-size="22.00" fill="#dcdcdc" text-anchor="start" textLength="12.2" lengthAdjust="spacingAndGlyphs">0</text>
<text x="198.3" y="967.5" font-size="22.00" fill="#dcdcdc" text-anchor="start" textLength="30.6" lengthAdjust="spacingAndGlyphs">0,5</text>
<text x="306.8" y="967.5" font-size="22.00" fill="#dcdcdc" text-anchor="start" textLength="12.2" lengthAdjust="spacingAndGlyphs">1</text>
<text x="406.1" y="967.5" font-size="22.00" fill="#dcdcdc" text-anchor="start" textLength="12.2" lengthAdjust="spacingAndGlyphs">2</text>
<text x="505.4" y="967.5" font-size="22.00" fill="#dcdcdc" text-anchor="start" textLength="12.2" lengthAdjust="spacingAndGlyphs">3</text>
<text x="604.7" y="967.5" font-size="22.00" fill="#dcdcdc" text-anchor="start" textLength="12.2" lengthAdjust="spacingAndGlyphs">4</text>
<text x="704.0" y="967.5" font-size="22.00" fill="#dcdcdc" text-anchor="start" textLength="12.2" lengthAdjust="spacingAndGlyphs">5</text>
<text x="791.1" y="967.5" font-size="22.00" fill="#dcdcdc" text-anchor="start" textLength="36.7" lengthAdjust="spacingAndGlyphs">100</text>
<text x="1249.9" y="713.4" font-size="22.86" fill="#f0f0f0" text-anchor="start" textLength="139.9" lengthAdjust="spacingAndGlyphs">Gamma: 2,41</text>
<rect x="920.80" y="719.40" width="797.80" height="223.40" fill="#232323"/>
<line x1="920.80" x2="1718.60" y1="748.20" y2="748.20" stroke="#9c9c9c" stroke-width="2"/>
<line x1="920.80" x2="1718.60" y1="817.00" y2="817.00" stroke="#9c9c9c" stroke-width="2"/>
<line x1="920.80" x2="1718.60" y1="888.30" y2="888.30" stroke="#9c9c9c" stroke-width="2"/>
<rect x="930.40" y="831.20" width="77.60" height="111.00" fill="url(#gBlk)" stroke="#000" stroke-width="1.7"/>
<rect x="1030.40" y="823.40" width="77.80" height="118.80" fill="url(#gBlk)" stroke="#000" stroke-width="1.7"/>
<rect x="1130.40" y="816.00" width="77.80" height="126.20" fill="url(#gBlk)" stroke="#000" stroke-width="1.7"/>
<rect x="1230.20" y="823.40" width="77.80" height="118.80" fill="url(#gBlk)" stroke="#000" stroke-width="1.7"/>
<rect x="1328.40" y="835.60" width="77.60" height="106.60" fill="url(#gBlk2)" stroke="#000" stroke-width="1.7"/>
<rect x="1428.20" y="840.20" width="77.80" height="102.00" fill="url(#gBlk2)" stroke="#000" stroke-width="1.7"/>
<rect x="1527.60" y="845.60" width="78.20" height="96.60" fill="url(#gBlk2)" stroke="#000" stroke-width="1.7"/>
<rect x="1629.20" y="831.20" width="76.20" height="111.00" fill="#ffffff" stroke="#000" stroke-width="1.6"/>
<line x1="969.30" x2="1667.80" y1="829.80" y2="829.80" stroke="#ffff00" stroke-width="4"/>
<rect x="920.80" y="719.40" width="797.80" height="223.40" fill="none" stroke="#9c9c9c" stroke-width="2"/>
<line x1="920.80" x2="920.80" y1="942.80" y2="952.20" stroke="#dcdcdc" stroke-width="2"/>
<line x1="1020.52" x2="1020.52" y1="942.80" y2="952.20" stroke="#dcdcdc" stroke-width="2"/>
<line x1="1120.25" x2="1120.25" y1="942.80" y2="952.20" stroke="#dcdcdc" stroke-width="2"/>
<line x1="1219.97" x2="1219.97" y1="942.80" y2="952.20" stroke="#dcdcdc" stroke-width="2"/>
<line x1="1319.70" x2="1319.70" y1="942.80" y2="952.20" stroke="#dcdcdc" stroke-width="2"/>
<line x1="1419.42" x2="1419.42" y1="942.80" y2="952.20" stroke="#dcdcdc" stroke-width="2"/>
<line x1="1519.15" x2="1519.15" y1="942.80" y2="952.20" stroke="#dcdcdc" stroke-width="2"/>
<line x1="1618.88" x2="1618.88" y1="942.80" y2="952.20" stroke="#dcdcdc" stroke-width="2"/>
<line x1="1718.60" x2="1718.60" y1="942.80" y2="952.20" stroke="#dcdcdc" stroke-width="2"/>
<text x="963.8" y="967.5" font-size="22.00" fill="#dcdcdc" text-anchor="start" textLength="12.2" lengthAdjust="spacingAndGlyphs">0</text>
<text x="1054.4" y="967.5" font-size="22.00" fill="#dcdcdc" text-anchor="start" textLength="30.6" lengthAdjust="spacingAndGlyphs">0,5</text>
<text x="1163.3" y="967.5" font-size="22.00" fill="#dcdcdc" text-anchor="start" textLength="12.2" lengthAdjust="spacingAndGlyphs">1</text>
<text x="1263.0" y="967.5" font-size="22.00" fill="#dcdcdc" text-anchor="start" textLength="12.2" lengthAdjust="spacingAndGlyphs">2</text>
<text x="1362.7" y="967.5" font-size="22.00" fill="#dcdcdc" text-anchor="start" textLength="12.2" lengthAdjust="spacingAndGlyphs">3</text>
<text x="1462.5" y="967.5" font-size="22.00" fill="#dcdcdc" text-anchor="start" textLength="12.2" lengthAdjust="spacingAndGlyphs">4</text>
<text x="1562.2" y="967.5" font-size="22.00" fill="#dcdcdc" text-anchor="start" textLength="12.2" lengthAdjust="spacingAndGlyphs">5</text>
<text x="1649.7" y="967.5" font-size="22.00" fill="#dcdcdc" text-anchor="start" textLength="36.7" lengthAdjust="spacingAndGlyphs">100</text>
<text x="1870.9" y="713.4" font-size="22.86" fill="#f0f0f0" text-anchor="start" textLength="143.5" lengthAdjust="spacingAndGlyphs">ΔE 2000: 0,78</text>
<rect x="1785.80" y="719.20" width="315.20" height="253.80" fill="#232323"/>
<line x1="1785.80" x2="2101.00" y1="762.30" y2="762.30" stroke="#9c9c9c" stroke-width="2"/>
<line x1="1785.80" x2="2101.00" y1="804.40" y2="804.40" stroke="#9c9c9c" stroke-width="2"/>
<line x1="1785.80" x2="2101.00" y1="889.40" y2="889.40" stroke="#9c9c9c" stroke-width="2"/>
<line x1="1785.80" x2="2101.00" y1="846.30" y2="846.30" stroke="#e6e600" stroke-width="2"/>
<line x1="1784.80" x2="2101.50" y1="931.40" y2="931.40" stroke="#0a8a0a" stroke-width="2"/>
<rect x="1817.20" y="942.00" width="250.10" height="30.50" fill="url(#gWhtDE)" stroke="#000" stroke-width="2.0"/>
<rect x="1785.80" y="719.20" width="315.20" height="253.80" fill="none" stroke="#9c9c9c" stroke-width="2"/>
<text x="2258.7" y="712.0" font-size="22.57" fill="#f0f0f0" text-anchor="start" textLength="127.3" lengthAdjust="spacingAndGlyphs">Gamma: 2,4</text>
<rect x="2165.80" y="719.20" width="315.80" height="253.80" fill="#232323"/>
<line x1="2165.80" x2="2481.60" y1="752.50" y2="752.50" stroke="#9c9c9c" stroke-width="2"/>
<line x1="2165.80" x2="2481.60" y1="831.60" y2="831.60" stroke="#9c9c9c" stroke-width="2"/>
<line x1="2165.80" x2="2481.60" y1="910.60" y2="910.60" stroke="#9c9c9c" stroke-width="2"/>
<rect x="2197.80" y="845.80" width="248.80" height="126.70" fill="#ffffff" stroke="#000" stroke-width="1.8"/>
<rect x="2165.80" y="719.20" width="315.80" height="253.80" fill="none" stroke="#9c9c9c" stroke-width="2"/>
<text x="402.5" y="1025.9" font-size="22.57" fill="#f0f0f0" text-anchor="start" textLength="122.5" lengthAdjust="spacingAndGlyphs">CCT: 6390 K</text>
<circle cx="551.5" cy="1016.8" r="9.1" fill="url(#gDot)"/>
<rect x="67.20" y="1031.20" width="794.00" height="233.80" fill="#232323"/>
<line x1="67.20" x2="861.20" y1="1098.00" y2="1098.00" stroke="#9c9c9c" stroke-width="2"/>
<line x1="67.20" x2="861.20" y1="1164.80" y2="1164.80" stroke="#9c9c9c" stroke-width="2"/>
<line x1="67.20" x2="861.20" y1="1230.90" y2="1230.90" stroke="#9c9c9c" stroke-width="2"/>
<rect x="76.90" y="1145.80" width="77.60" height="118.60" fill="url(#gBlkC)" stroke="#000" stroke-width="1.7"/>
<rect x="175.00" y="1150.70" width="77.30" height="113.70" fill="url(#gBlkC)" stroke="#000" stroke-width="1.7"/>
<rect x="275.20" y="1169.30" width="76.90" height="95.10" fill="url(#gBlkC)" stroke="#000" stroke-width="1.7"/>
<rect x="375.40" y="1152.40" width="76.20" height="112.00" fill="url(#gBlkC)" stroke="#000" stroke-width="1.7"/>
<rect x="473.20" y="1159.00" width="76.90" height="105.40" fill="url(#gBlkC)" stroke="#000" stroke-width="1.7"/>
<rect x="573.20" y="1140.00" width="77.10" height="124.40" fill="url(#gBlkC)" stroke="#000" stroke-width="1.7"/>
<rect x="672.50" y="1152.40" width="77.30" height="112.00" fill="url(#gBlkC)" stroke="#000" stroke-width="1.7"/>
<rect x="772.00" y="1150.70" width="75.20" height="113.70" fill="url(#gWhtC)" stroke="#000" stroke-width="1.6"/>
<line x1="67.20" x2="861.20" y1="1148.30" y2="1148.30" stroke="#d8a018" stroke-width="2"/>
<rect x="67.20" y="1031.20" width="794.00" height="233.80" fill="none" stroke="#9c9c9c" stroke-width="2"/>
<line x1="67.20" x2="67.20" y1="1265.00" y2="1274.80" stroke="#dcdcdc" stroke-width="2"/>
<line x1="166.45" x2="166.45" y1="1265.00" y2="1274.80" stroke="#dcdcdc" stroke-width="2"/>
<line x1="265.70" x2="265.70" y1="1265.00" y2="1274.80" stroke="#dcdcdc" stroke-width="2"/>
<line x1="364.95" x2="364.95" y1="1265.00" y2="1274.80" stroke="#dcdcdc" stroke-width="2"/>
<line x1="464.20" x2="464.20" y1="1265.00" y2="1274.80" stroke="#dcdcdc" stroke-width="2"/>
<line x1="563.45" x2="563.45" y1="1265.00" y2="1274.80" stroke="#dcdcdc" stroke-width="2"/>
<line x1="662.70" x2="662.70" y1="1265.00" y2="1274.80" stroke="#dcdcdc" stroke-width="2"/>
<line x1="761.95" x2="761.95" y1="1265.00" y2="1274.80" stroke="#dcdcdc" stroke-width="2"/>
<line x1="861.20" x2="861.20" y1="1265.00" y2="1274.80" stroke="#dcdcdc" stroke-width="2"/>
<text x="110.2" y="1290.5" font-size="22.00" fill="#dcdcdc" text-anchor="start" textLength="12.2" lengthAdjust="spacingAndGlyphs">0</text>
<text x="200.3" y="1290.5" font-size="22.00" fill="#dcdcdc" text-anchor="start" textLength="30.6" lengthAdjust="spacingAndGlyphs">0,5</text>
<text x="308.7" y="1290.5" font-size="22.00" fill="#dcdcdc" text-anchor="start" textLength="12.2" lengthAdjust="spacingAndGlyphs">1</text>
<text x="408.0" y="1290.5" font-size="22.00" fill="#dcdcdc" text-anchor="start" textLength="12.2" lengthAdjust="spacingAndGlyphs">2</text>
<text x="507.2" y="1290.5" font-size="22.00" fill="#dcdcdc" text-anchor="start" textLength="12.2" lengthAdjust="spacingAndGlyphs">3</text>
<text x="606.5" y="1290.5" font-size="22.00" fill="#dcdcdc" text-anchor="start" textLength="12.2" lengthAdjust="spacingAndGlyphs">4</text>
<text x="705.7" y="1290.5" font-size="22.00" fill="#dcdcdc" text-anchor="start" textLength="12.2" lengthAdjust="spacingAndGlyphs">5</text>
<text x="792.7" y="1290.5" font-size="22.00" fill="#dcdcdc" text-anchor="start" textLength="36.7" lengthAdjust="spacingAndGlyphs">100</text>
<text x="1891.3" y="1026.2" font-size="22.71" fill="#f0f0f0" text-anchor="start" textLength="103.3" lengthAdjust="spacingAndGlyphs">CCT: 6484</text>
<rect x="1784.60" y="1031.20" width="315.20" height="265.00" fill="#232323"/>
<line x1="1784.60" x2="2099.80" y1="1033.60" y2="1033.60" stroke="#9c9c9c" stroke-width="2"/>
<line x1="1784.60" x2="2099.80" y1="1108.80" y2="1108.80" stroke="#9c9c9c" stroke-width="2"/>
<line x1="1784.60" x2="2099.80" y1="1183.10" y2="1183.10" stroke="#9c9c9c" stroke-width="2"/>
<line x1="1784.60" x2="2099.80" y1="1258.10" y2="1258.10" stroke="#9c9c9c" stroke-width="2"/>
<rect x="1816.60" y="1165.60" width="249.40" height="130.10" fill="url(#gWhtC)" stroke="#000" stroke-width="1.8"/>
<line x1="1784.60" x2="2099.80" y1="1163.40" y2="1163.40" stroke="#d8a018" stroke-width="2.4"/>
<rect x="1784.60" y="1031.20" width="315.20" height="265.00" fill="none" stroke="#9c9c9c" stroke-width="2"/>
<text x="1271.8" y="1021.9" font-size="23.00" fill="#f0f0f0" text-anchor="start" textLength="90.8" lengthAdjust="spacingAndGlyphs">CIE 1931</text>
<rect x="918.00" y="1029.00" width="800.00" height="34.00" fill="url(#car0)"/>
<rect x="918.00" y="1029.00" width="800.00" height="34.00" fill="url(#car1)" mask="url(#cak0)"/>
<rect x="918.00" y="1063.00" width="800.00" height="34.00" fill="url(#car1)"/>
<rect x="918.00" y="1063.00" width="800.00" height="34.00" fill="url(#car2)" mask="url(#cak1)"/>
<rect x="918.00" y="1097.00" width="800.00" height="33.00" fill="url(#car2)"/>
<rect x="918.00" y="1097.00" width="800.00" height="33.00" fill="url(#car3)" mask="url(#cak2)"/>
<rect x="918.00" y="1130.00" width="800.00" height="34.00" fill="url(#car3)"/>
<rect x="918.00" y="1130.00" width="800.00" height="34.00" fill="url(#car4)" mask="url(#cak3)"/>
<rect x="918.00" y="1164.00" width="800.00" height="34.00" fill="url(#car4)"/>
<rect x="918.00" y="1164.00" width="800.00" height="34.00" fill="url(#car5)" mask="url(#cak4)"/>
<rect x="918.00" y="1198.00" width="800.00" height="34.00" fill="url(#car5)"/>
<rect x="918.00" y="1198.00" width="800.00" height="34.00" fill="url(#car6)" mask="url(#cak5)"/>
<rect x="918.00" y="1232.00" width="800.00" height="34.00" fill="url(#car6)"/>
<rect x="918.00" y="1232.00" width="800.00" height="34.00" fill="url(#car7)" mask="url(#cak6)"/>
<rect x="918.00" y="1266.00" width="800.00" height="34.00" fill="url(#car7)"/>
<rect x="918.00" y="1266.00" width="800.00" height="34.00" fill="url(#car8)" mask="url(#cak7)"/>
<clipPath id="clipCie"><rect x="918.6" y="1028.8" width="799.1999999999999" height="271.20000000000005"/></clipPath>
<g clip-path="url(#clipCie)">
<rect x="1306.8" y="1154.6" width="20.6" height="20" fill="none" stroke="#000" stroke-width="2.2"/>
<circle cx="1322.6" cy="1167.2" r="6.4" fill="#fff" stroke="#000" stroke-width="1.8"/>
<circle cx="1370.6" cy="1239.6" r="7.2" fill="#0a0a0a"/>
<circle cx="1302.2" cy="1295.2" r="7.2" fill="#0a0a0a"/>
</g>
<rect x="918.60" y="1028.80" width="799.20" height="271.20" fill="none" stroke="#8c8c8c" stroke-width="2"/>
<text x="2276.0" y="1022.8" font-size="22.57" fill="#f0f0f0" text-anchor="start" textLength="90.2" lengthAdjust="spacingAndGlyphs">CIE 1931</text>
<rect x="2165.00" y="1029.00" width="314.00" height="34.00" fill="url(#cbr0)"/>
<rect x="2165.00" y="1029.00" width="314.00" height="34.00" fill="url(#cbr1)" mask="url(#cbk0)"/>
<rect x="2165.00" y="1063.00" width="314.00" height="34.00" fill="url(#cbr1)"/>
<rect x="2165.00" y="1063.00" width="314.00" height="34.00" fill="url(#cbr2)" mask="url(#cbk1)"/>
<rect x="2165.00" y="1097.00" width="314.00" height="34.00" fill="url(#cbr2)"/>
<rect x="2165.00" y="1097.00" width="314.00" height="34.00" fill="url(#cbr3)" mask="url(#cbk2)"/>
<rect x="2165.00" y="1131.00" width="314.00" height="34.00" fill="url(#cbr3)"/>
<rect x="2165.00" y="1131.00" width="314.00" height="34.00" fill="url(#cbr4)" mask="url(#cbk3)"/>
<rect x="2165.00" y="1165.00" width="314.00" height="33.00" fill="url(#cbr4)"/>
<rect x="2165.00" y="1165.00" width="314.00" height="33.00" fill="url(#cbr5)" mask="url(#cbk4)"/>
<rect x="2165.00" y="1198.00" width="314.00" height="34.00" fill="url(#cbr5)"/>
<rect x="2165.00" y="1198.00" width="314.00" height="34.00" fill="url(#cbr6)" mask="url(#cbk5)"/>
<rect x="2165.00" y="1232.00" width="314.00" height="34.00" fill="url(#cbr6)"/>
<rect x="2165.00" y="1232.00" width="314.00" height="34.00" fill="url(#cbr7)" mask="url(#cbk6)"/>
<rect x="2165.00" y="1266.00" width="314.00" height="34.00" fill="url(#cbr7)"/>
<rect x="2165.00" y="1266.00" width="314.00" height="34.00" fill="url(#cbr8)" mask="url(#cbk7)"/>
<rect x="2311.6" y="1154.4" width="21" height="20.6" fill="none" stroke="#000" stroke-width="2.2"/>
<circle cx="2324.2" cy="1167.4" r="6.4" fill="#fff" stroke="#000" stroke-width="1.8"/>
<rect x="2165.80" y="1029.20" width="312.80" height="270.80" fill="none" stroke="#8c8c8c" stroke-width="2"/>
<rect x="0.00" y="1315.20" width="2513.20" height="27.80" fill="url(#gBot)"/>
<rect x="2.0" y="1315.2" width="150" height="40" rx="4" fill="url(#gThumb)"/>
<rect x="7.2" y="1320.6" width="139.6" height="40" rx="3" fill="#000"/>
<rect x="153.9" y="1315.2" width="150" height="40" rx="4" fill="url(#gThumb)"/>
<rect x="159.1" y="1320.6" width="139.6" height="40" rx="3" fill="#000"/>
<rect x="305.9" y="1315.2" width="150" height="40" rx="4" fill="url(#gThumb)"/>
<rect x="311.1" y="1320.6" width="139.6" height="40" rx="3" fill="#0a0a0a"/>
<rect x="457.8" y="1315.2" width="150" height="40" rx="4" fill="url(#gThumb)"/>
<rect x="463.0" y="1320.6" width="139.6" height="40" rx="3" fill="#0a0a0a"/>
<rect x="609.8" y="1315.2" width="150" height="40" rx="4" fill="url(#gThumb)"/>
<rect x="615.0" y="1320.6" width="139.6" height="40" rx="3" fill="#0a0a0a"/>
<rect x="761.8" y="1315.2" width="150" height="40" rx="4" fill="url(#gThumb)"/>
<rect x="767.0" y="1320.6" width="139.6" height="40" rx="3" fill="#0a0a0a"/>
<rect x="913.7" y="1315.2" width="150" height="40" rx="4" fill="url(#gThumb)"/>
<rect x="918.9" y="1320.6" width="139.6" height="40" rx="3" fill="#0a0a0a"/>
<rect x="1066.2" y="1315.2" width="149.4" height="40" rx="4" fill="#2a2a2a"/>
<rect x="1071.3" y="1320.6" width="139.4" height="40" rx="3" fill="#fff"/>
<path d="M2238 1343 V1320 a4.5 4.5 0 0 1 4.5 -4.5 H2281.3 a4.5 4.5 0 0 1 4.5 4.5 V1343 Z" fill="url(#gTB)"/>
<line x1="2238.00" x2="2285.80" y1="1334.00" y2="1334.00" stroke="#6a6a6a" stroke-width="1.2"/>
<circle cx="2261.9" cy="1324.6" r="7.6" fill="url(#gTBc)"/>
<path d="M2257.7 1327 L2261.9 1321.6 L2266.1 1327 Z" fill="#3a3a3a"/>
<rect x="2247.4" y="1340.2" width="30" height="10" rx="3" fill="none" stroke="#2c2c2c" stroke-width="1.4"/>
<rect x="2287.20" y="1315.50" width="45.80" height="27.50" fill="url(#gTB)"/>
<circle cx="2310.4" cy="1330.8" r="10" fill="url(#gTBc)"/>
<rect x="2334.00" y="1315.50" width="44.20" height="27.50" fill="url(#gTB)"/>
<circle cx="2356.4" cy="1330.8" r="10" fill="url(#gTBc)"/>
<rect x="2379.20" y="1315.50" width="44.00" height="27.50" fill="url(#gTB)"/>
<circle cx="2401.5" cy="1330.8" r="10" fill="url(#gTBc)"/>
<rect x="2424.20" y="1315.50" width="43.80" height="27.50" fill="url(#gTB)"/>
<circle cx="2446.4" cy="1330.8" r="10" fill="url(#gTBc)"/>
<rect x="2469.00" y="1315.50" width="44.20" height="27.50" fill="url(#gTB)"/>
<circle cx="2491.4" cy="1330.8" r="10" fill="url(#gTBc)"/>
<rect x="2306.5" y="1326.8" width="7.8" height="8" fill="#3a3a3a"/>
<path d="M2353.0 1325.6 v10.6 l8.6 -5.3 z" fill="#3a3a3a"/>
<path d="M2398.1 1326.2 h-2.4 v9.4 h2.4 M2404.9 1326.2 h2.4 v9.4 h-2.4" fill="none" stroke="#3a3a3a" stroke-width="1.5"/>
<path d="M2399.3 1331 h1.6 M2402.1 1331 h1.6" stroke="#3a3a3a" stroke-width="1.4"/>
<path d="M2446.4 1331 c-2 -3.4 -6 -3.4 -6 0 c0 3.4 4 3.4 6 0 c2 -3.4 6 -3.4 6 0 c0 3.4 -4 3.4 -6 0 z" fill="none" stroke="#3a3a3a" stroke-width="1.5"/>
<g fill="none" stroke="#3a3a3a" stroke-width="1.9"><path d="M2486.8 1330 a4.8 4.8 0 0 1 8.2 -2.6"/><path d="M2496.0 1331.8 a4.8 4.8 0 0 1 -8.2 2.6"/></g>
<path d="M2493.0 1328.6 h3.8 v-3.8 z M2489.8 1333.2 h-3.8 v3.8 z" fill="#3a3a3a"/>
</svg>
</div>
</body>
</html>
